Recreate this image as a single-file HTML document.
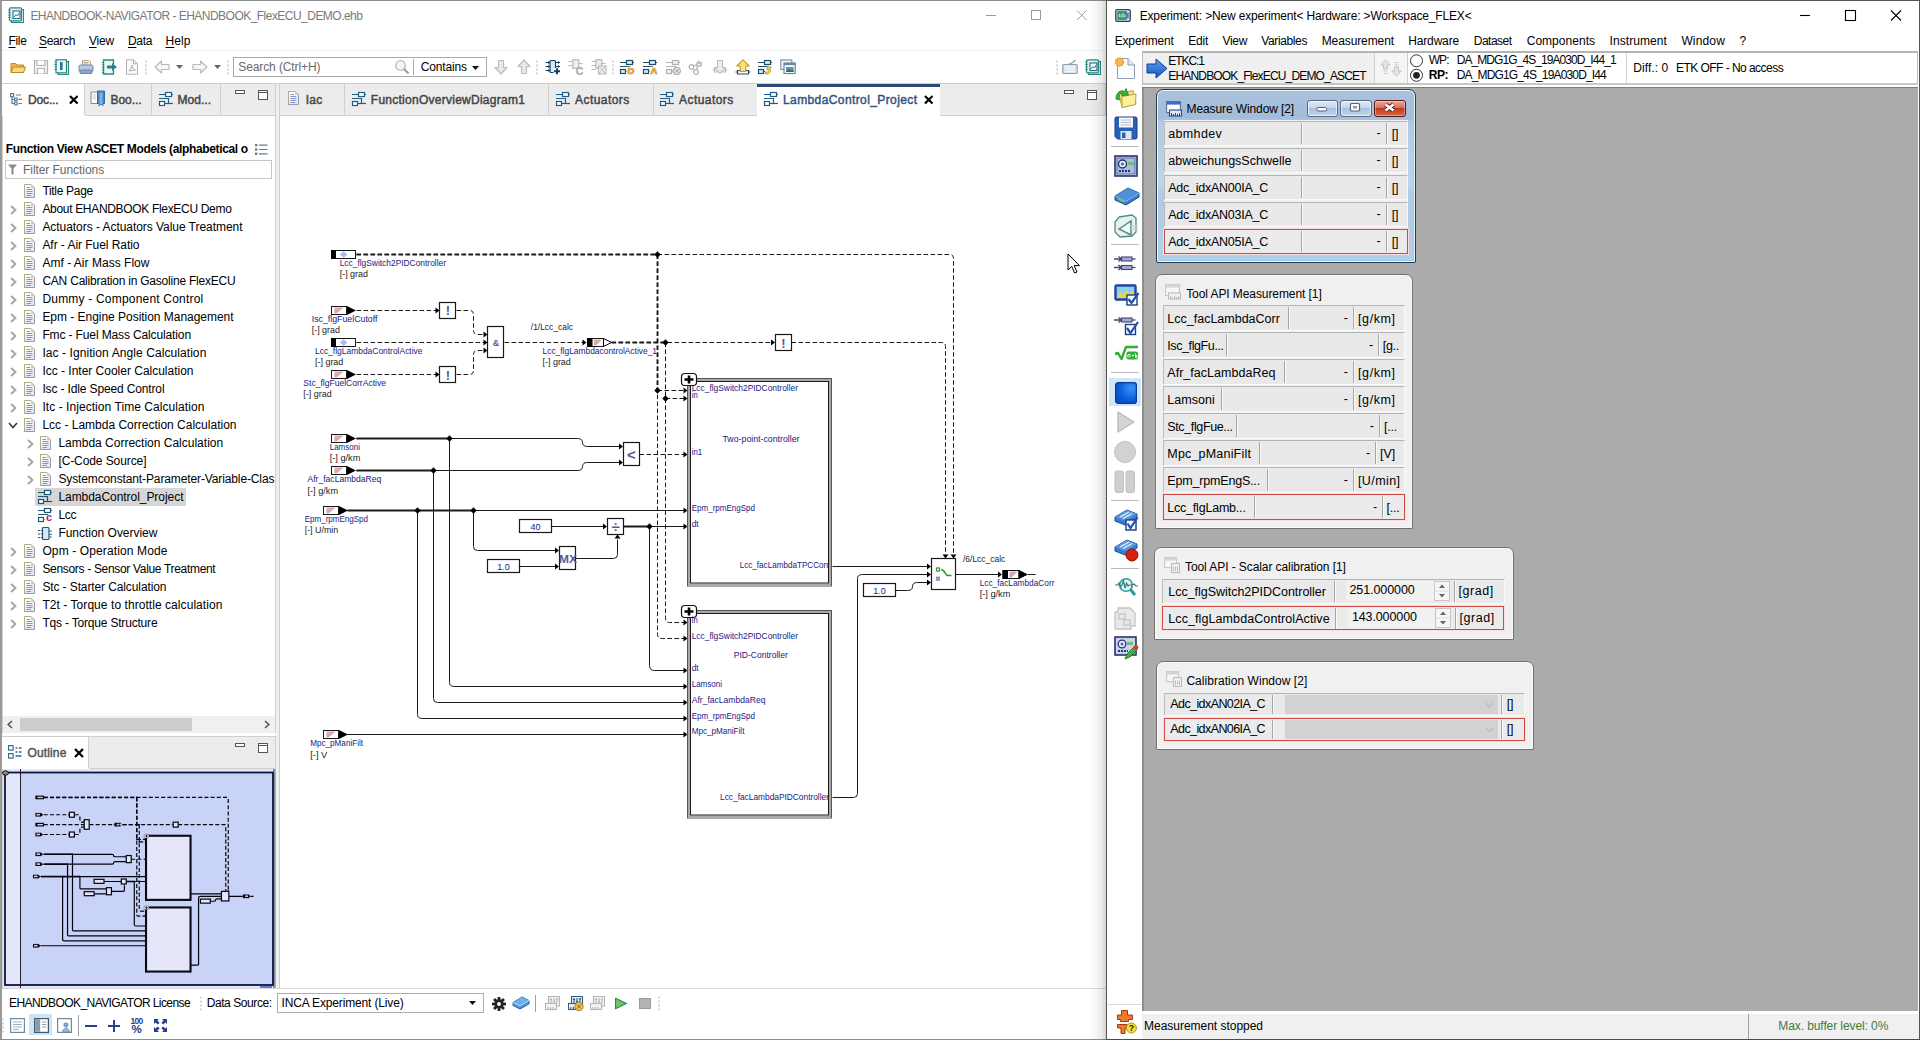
<!DOCTYPE html>
<html lang="en"><head><meta charset="utf-8"><title>EHANDBOOK-NAVIGATOR / INCA Experiment</title>
<style>html,body{margin:0;padding:0}
body{width:1920px;height:1040px;position:relative;overflow:hidden;background:#fff;font-family:"Liberation Sans",sans-serif;font-size:12px;color:#000}
.a{position:absolute}
.g{left:0;top:0}
.t{position:absolute;white-space:nowrap;line-height:1}
u{text-decoration-thickness:1px;text-underline-offset:1.5px}

.rw{background:#e9e9e9;box-sizing:border-box;border:1px solid;border-color:#b4b4b4 #fbfbfb #fbfbfb #bcbcbc}
.rw.red{border:1.5px solid #cf4b47;background:#ebebeb;box-shadow:0 0 0 1px #fbdcdc}
.dv{width:1px;background:#a6a6a6;box-shadow:1px 0 0 #fafafa}
.pw{background:#f0f0f0;border:1px solid #707070;border-radius:7px 7px 1px 1px;box-sizing:border-box;box-shadow:inset 0 0 0 1px #fafafa}
.aero{box-sizing:border-box;border:1px solid #2e3a48;border-radius:7px 7px 2px 2px;background:linear-gradient(180deg,#aac2de 0,#a2bcda 16%,#b1cae5 19%,#bdd4ec 55%,#aecbe7 60%,#b4cfe9 100%);box-shadow:inset 0 0 0 1px rgba(255,255,255,.8),inset -2px -2px 0 0 rgba(120,210,240,.55)}
.ab{box-sizing:border-box;border:1px solid #5a6a80;border-radius:3px;background:linear-gradient(180deg,#dfe9f5 0,#c5d6ea 45%,#a9c1dd 50%,#c3d6ea 100%);box-shadow:inset 0 0 0 1px rgba(255,255,255,.6)}
.ac{border-color:#5a1d14;background:linear-gradient(180deg,#e9a99b 0,#d4705c 45%,#c03a24 50%,#d46a4a 100%);box-shadow:inset 0 0 0 1px rgba(255,255,255,.35)}
</style></head>
<body>
<svg width="0" height="0" style="position:absolute"><defs><symbol id="i-doc" viewBox="0 0 13 16"><linearGradient id="dgr" x1="0" y1="0" x2="0" y2="1"><stop offset="0" stop-color="#fffef8"/><stop offset="1" stop-color="#dfe7f7"/></linearGradient><path d="M.5 .5H7L10.5 4V13.5H.5Z" fill="url(#dgr)" stroke="#9a9aa6" stroke-width="1"/><path d="M.5 13.5V.5H7L10.5 4" fill="none" stroke="#b5ab8c" stroke-width="1"/><path d="M7 .5V4H10.5Z" fill="#d6d0b8"/><path d="M2.5 3.5H6M2.5 5.5H8.5M2.5 7.5H8.5M2.5 9.5H8.5M2.5 11.5H7" stroke="#7d97cf" stroke-width="1"/></symbol></defs></svg>
<div class="a g" id="navigator-window" aria-label="EHANDBOOK-NAVIGATOR">
<div class="a g" id="nav-chrome" aria-label="Title bar, menu and toolbar">
<div class="a" style="left:0px;top:0px;width:1106px;height:1040px;background:#fff;"></div>
<div class="a" style="left:0px;top:0px;width:1106px;height:1px;background:#8c8c8c;"></div>
<div class="a" style="left:0px;top:0px;width:1.5px;height:1040px;background:#9a9a9a;"></div>
<svg class="a" style="left:8px;top:7px;" width="16" height="16" viewBox="0 0 16 16"><rect x="3.5" y="2.5" width="12" height="13" fill="#e6f3f1" stroke="#2a8a80" stroke-width="1.1"/><rect x="1.5" y=".8" width="12" height="13" rx="1" fill="#dff0ee" stroke="#2a8a80" stroke-width="1.2"/><path d="M.3 3H2.6M.3 5.5H2.6M.3 8H2.6M.3 10.5H2.6" stroke="#2a8a80" stroke-width="1.1"/><rect x="5" y="4" width="7" height="7.5" fill="#fff" stroke="#256f8a" stroke-width="1.1"/><path d="M6 10L8 7.5L9.5 9L11.5 5.5" fill="none" stroke="#256f8a" stroke-width="1"/></svg>
<span class="t" style="left:30.4px;top:9.6px;color:#7a7a7a;letter-spacing:-0.53px;">EHANDBOOK-NAVIGATOR - EHANDBOOK_FlexECU_DEMO.ehb</span>
<svg class="a" style="left:980px;top:5px" width="120" height="20" viewBox="0 0 120 20"><g fill="none" stroke="#9b9b9b" stroke-width="1"><path d="M6 10.5H16"/><rect x="51.5" y="5.5" width="9" height="9"/><path d="M97 5.5L106.5 15M106.5 5.5L97 15"/></g></svg>
<span class="t" style="left:8.5px;top:34.5px;letter-spacing:-0.34px;"><u>F</u>ile</span>
<span class="t" style="left:39.0px;top:34.5px;letter-spacing:-0.34px;"><u>S</u>earch</span>
<span class="t" style="left:89.0px;top:34.5px;letter-spacing:-0.20px;"><u>V</u>iew</span>
<span class="t" style="left:128.0px;top:34.5px;letter-spacing:-0.34px;"><u>D</u>ata</span>
<span class="t" style="left:165.5px;top:34.5px;letter-spacing:0.08px;"><u>H</u>elp</span>
<div class="a" style="left:2px;top:50px;width:1104px;height:1px;background:#f0f0f0;"></div>
<svg class="a" style="left:145px;top:59px;" width="2" height="16" viewBox="0 0 2 16"><rect x="0" y="1.5" width="2" height="2" fill="#d6d6d6"/><rect x="0" y="5.5" width="2" height="2" fill="#d6d6d6"/><rect x="0" y="9.5" width="2" height="2" fill="#d6d6d6"/><rect x="0" y="13.5" width="2" height="2" fill="#d6d6d6"/></svg>
<svg class="a" style="left:226.5px;top:59px;" width="2" height="16" viewBox="0 0 2 16"><rect x="0" y="1.5" width="2" height="2" fill="#d6d6d6"/><rect x="0" y="5.5" width="2" height="2" fill="#d6d6d6"/><rect x="0" y="9.5" width="2" height="2" fill="#d6d6d6"/><rect x="0" y="13.5" width="2" height="2" fill="#d6d6d6"/></svg>
<svg class="a" style="left:536px;top:59px;" width="2" height="16" viewBox="0 0 2 16"><rect x="0" y="1.5" width="2" height="2" fill="#d6d6d6"/><rect x="0" y="5.5" width="2" height="2" fill="#d6d6d6"/><rect x="0" y="9.5" width="2" height="2" fill="#d6d6d6"/><rect x="0" y="13.5" width="2" height="2" fill="#d6d6d6"/></svg>
<svg class="a" style="left:611.5px;top:59px;" width="2" height="16" viewBox="0 0 2 16"><rect x="0" y="1.5" width="2" height="2" fill="#d6d6d6"/><rect x="0" y="5.5" width="2" height="2" fill="#d6d6d6"/><rect x="0" y="9.5" width="2" height="2" fill="#d6d6d6"/><rect x="0" y="13.5" width="2" height="2" fill="#d6d6d6"/></svg>
<svg class="a" style="left:1056px;top:59px;" width="2" height="16" viewBox="0 0 2 16"><rect x="0" y="1.5" width="2" height="2" fill="#d6d6d6"/><rect x="0" y="5.5" width="2" height="2" fill="#d6d6d6"/><rect x="0" y="9.5" width="2" height="2" fill="#d6d6d6"/><rect x="0" y="13.5" width="2" height="2" fill="#d6d6d6"/></svg>
<svg class="a" style="left:10px;top:59px;" width="16" height="16" viewBox="0 0 16 16"><path d="M1 4.5H5.5L7 6H13.5V13.5H1Z" fill="#e8b84c" stroke="#b98a25" stroke-width="1"/><path d="M1 13.5L3.5 8H15.5L13.5 13.5Z" fill="#fbd977" stroke="#b98a25" stroke-width="1"/></svg>
<svg class="a" style="left:33px;top:59px;" width="16" height="16" viewBox="0 0 16 16"><path d="M1.5 1.5H14.5V14.5H1.5Z" fill="#f4f4f4" stroke="#b4b4b4" stroke-width="1.2"/><path d="M4 1.5V6.5H12V1.5" fill="#fff" stroke="#b4b4b4" stroke-width="1.2"/><path d="M4.5 14.5V9.5H11.5V14.5" fill="#fff" stroke="#b4b4b4" stroke-width="1.2"/></svg>
<svg class="a" style="left:54px;top:59px;" width="16" height="16" viewBox="0 0 16 16"><rect x="4" y="2.5" width="10.5" height="13" fill="#e6f3f1" stroke="#2a8a80" stroke-width="1.2"/><rect x="2" y=".8" width="10.5" height="13" fill="#eef7f6" stroke="#2a8a80" stroke-width="1.2"/><path d="M.5 3H3M.5 5.5H3M.5 8H3M.5 10.5H3" stroke="#2a8a80" stroke-width="1.2"/><rect x="6" y="3" width="2.6" height="8" fill="#2f6f8f"/></svg>
<svg class="a" style="left:78px;top:59px;" width="16" height="16" viewBox="0 0 16 16"><path d="M4.5 6V1.5H11L12.5 3V6" fill="#fff8e0" stroke="#b5a572" stroke-width="1"/><rect x="1" y="6" width="14" height="6.5" rx="1.5" fill="#b8c8e4" stroke="#6c86b6" stroke-width="1"/><rect x="2" y="11" width="12" height="3.5" rx="1" fill="#8aa2cf" stroke="#6c86b6" stroke-width="1"/><path d="M5.5 3.5H10.5M5.5 5H10.5" stroke="#999" stroke-width=".8"/></svg>
<svg class="a" style="left:101px;top:59px;" width="16" height="16" viewBox="0 0 16 16"><path d="M12.5 5V1H2.5V15H12.5V11" fill="#eef7f6" stroke="#2a8a80" stroke-width="1.3"/><path d="M.8 3.5H3.2M.8 6H3.2M.8 8.5H3.2M.8 11H3.2M.8 13.5H3.2" stroke="#2a8a80" stroke-width="1.2"/><path d="M6 6.5H11V4L16 8L11 12V9.5H6Z" fill="#2a7f8a"/></svg>
<svg class="a" style="left:124px;top:59px;" width="16" height="16" viewBox="0 0 16 16"><path d="M2.5 .8H9.5L13.5 4.8V15.2H2.5Z" fill="#fafafa" stroke="#b0b0b0" stroke-width="1"/><path d="M9.5 .8V4.8H13.5" fill="none" stroke="#b0b0b0" stroke-width="1"/><path d="M5 12C7 10 8 7.5 8 6C8 8.5 9.5 10.5 11.5 11C9 11 7 11.3 5 12Z" fill="none" stroke="#b0b0b0" stroke-width="1"/></svg>
<svg class="a" style="left:154px;top:59px;" width="16" height="16" viewBox="0 0 16 16"><path d="M1 8L7.5 2V5.5H15V10.5H7.5V14Z" fill="#f6f6f6" stroke="#b9b9b9" stroke-width="1.2" stroke-linejoin="round"/></svg>
<svg class="a" style="left:192px;top:59px;" width="16" height="16" viewBox="0 0 16 16"><path d="M15 8L8.5 2V5.5H1V10.5H8.5V14Z" fill="#f6f6f6" stroke="#b9b9b9" stroke-width="1.2" stroke-linejoin="round"/></svg>
<svg class="a" style="left:493px;top:59px;" width="16" height="16" viewBox="0 0 16 16"><path d="M8 15L2 8.5H5.5V1.5H10.5V8.5H14Z" fill="#e9e9e9" stroke="#bdbdbd" stroke-width="1.2" stroke-linejoin="round"/></svg>
<svg class="a" style="left:516px;top:59px;" width="16" height="16" viewBox="0 0 16 16"><path d="M8 1L2 7.5H5.5V14.5H10.5V7.5H14Z" fill="#e9e9e9" stroke="#bdbdbd" stroke-width="1.2" stroke-linejoin="round"/></svg>
<svg class="a" style="left:545px;top:59px;" width="16" height="16" viewBox="0 0 16 16"><rect x="5" y="1.5" width="5.5" height="12" rx="1" fill="#dce9f8" stroke="#17405c" stroke-width="1.2"/><path d="M.5 3.5H5M.5 7.5H5M.5 11.5H5M10.5 3.5H15M10.5 7.5H15" stroke="#17405c" stroke-width="1.1"/><path d="M3 2L5 3.5L3 5M3 6L5 7.5L3 9M3 10L5 11.5L3 13M13 2L15 3.5L13 5M13 6L15 7.5L13 9" fill="#17405c"/><rect x="8.5" y="9" width="7" height="6.5" fill="#fff"/><path d="M9 12.2H15M12 9.2V15.2" stroke="#17405c" stroke-width="2"/></svg>
<svg class="a" style="left:568px;top:59px;" width="16" height="16" viewBox="0 0 16 16"><rect x="4.8" y=".8" width="6" height="8.5" fill="#efefef" stroke="#b8b8b8" stroke-width="1.2"/><path d="M.5 2.5H4.5M.5 6.5H4.5M11 4.5H14.5" stroke="#b8b8b8" stroke-width="1.1"/><text x="11.5" y="15.5" font-size="10.5" font-weight="bold" text-anchor="middle" fill="#b0b0b0" stroke="#b0b0b0" stroke-width=".4" font-family="Liberation Sans,sans-serif">C</text></svg>
<svg class="a" style="left:591px;top:59px;" width="16" height="16" viewBox="0 0 16 16"><rect x="4.8" y=".8" width="6" height="8.5" fill="#efefef" stroke="#b8b8b8" stroke-width="1.2"/><path d="M.5 2.5H4.5M.5 6.5H4.5M11 4.5H14.5" stroke="#b8b8b8" stroke-width="1.1"/><rect x="7.5" y="7" width="7.5" height="8" fill="#f2f2f2" stroke="#b8b8b8" stroke-width="1.1"/><path d="M7.5 7L15 15M15 7L7.5 15M.5 10.5H4.5" stroke="#b8b8b8" stroke-width="1"/></svg>
<svg class="a" style="left:619px;top:59px;" width="16" height="16" viewBox="0 0 16 16"><g transform="translate(1 1)" fill="none" stroke="#1f4d66" stroke-width="1.2"><rect x="6.5" y=".5" width="6" height="4" fill="#dcecf7"/><path d="M0 2.5H6.5M12.5 2.5H14"/><path d="M0 6.5H9.5V11.5"/><rect x=".5" y="9.5" width="5" height="4" fill="#dcecf7"/><path d="M5.5 11.5H14"/></g><rect x="7.5" y="7.8" width="9" height="8.5" fill="#fff"/><text x="12" y="15.4" font-size="9.5" font-weight="bold" text-anchor="middle" fill="#f2a640" stroke="#c98322" stroke-width=".7" paint-order="stroke" font-family="Liberation Sans,sans-serif">D</text></svg>
<svg class="a" style="left:642px;top:59px;" width="16" height="16" viewBox="0 0 16 16"><g transform="translate(1 1)" fill="none" stroke="#1f4d66" stroke-width="1.2"><rect x="6.5" y=".5" width="6" height="4" fill="#dcecf7"/><path d="M0 2.5H6.5M12.5 2.5H14"/><path d="M0 6.5H9.5V11.5"/><rect x=".5" y="9.5" width="5" height="4" fill="#dcecf7"/><path d="M5.5 11.5H14"/></g><rect x="7.5" y="7.8" width="9" height="8.5" fill="#fff"/><text x="12" y="15.4" font-size="9.5" font-weight="bold" text-anchor="middle" fill="#f2a640" stroke="#c98322" stroke-width=".7" paint-order="stroke" font-family="Liberation Sans,sans-serif">A</text></svg>
<svg class="a" style="left:665px;top:59px;" width="16" height="16" viewBox="0 0 16 16"><g transform="translate(1 1)" fill="none" stroke="#b0b0b0" stroke-width="1.2"><rect x="6.5" y=".5" width="6" height="4" fill="#f0f0f0"/><path d="M0 2.5H6.5M12.5 2.5H14"/><path d="M0 6.5H9.5V11.5"/><rect x=".5" y="9.5" width="5" height="4" fill="#f0f0f0"/><path d="M5.5 11.5H14"/></g><circle cx="11.8" cy="12" r="3.6" fill="#eee" stroke="#b0b0b0" stroke-width="1.2"/><path d="M9.6 9.8L14 14.2M14 9.8L9.6 14.2" stroke="#b0b0b0" stroke-width="1.2"/></svg>
<svg class="a" style="left:688px;top:59px;" width="16" height="16" viewBox="0 0 16 16"><g fill="none" stroke="#b4b4b4" stroke-width="1.3"><circle cx="3.5" cy="8" r="2.3"/><circle cx="8" cy="13" r="2.3"/><path d="M5.5 7L14 3M8.5 11L11 1.5"/><rect x="9" y="4" width="4" height="3" fill="#f3f3f3"/></g></svg>
<svg class="a" style="left:712px;top:59px;" width="16" height="16" viewBox="0 0 16 16"><path d="M2.5 9.5H13.5V13H2.5Z" fill="#f4f4f4" stroke="#b8b8b8" stroke-width="1.1"/><path d="M.5 11H2.5M13.5 11H15.5" stroke="#b8b8b8" stroke-width="1.1"/><path d="M8 14.5L2.5 8.5H5.5V1.5H10.5V8.5H13.5Z" fill="#ececec" stroke="#b8b8b8" stroke-width="1.1" stroke-linejoin="round"/></svg>
<svg class="a" style="left:735px;top:59px;" width="16" height="16" viewBox="0 0 16 16"><path d="M2.5 11.5H13.5V15H2.5Z" fill="#fff" stroke="#1f4d66" stroke-width="1.2"/><path d="M.5 13H2.5M13.5 13H15.5" stroke="#1f4d66" stroke-width="1.2"/><path d="M8 .8L1.8 7H5.2V12.5H10.8V7H14.2Z" fill="#fbe08a" stroke="#c79a22" stroke-width="1.1" stroke-linejoin="round"/></svg>
<svg class="a" style="left:757px;top:59px;" width="16" height="16" viewBox="0 0 16 16"><g transform="translate(1 1)" fill="none" stroke="#1f4d66" stroke-width="1.2"><rect x="6.5" y=".5" width="6" height="4" fill="#dcecf7"/><path d="M0 2.5H6.5M12.5 2.5H14"/><path d="M0 6.5H9.5V11.5"/><rect x=".5" y="9.5" width="5" height="4" fill="#dcecf7"/><path d="M5.5 11.5H14"/></g><rect x="8" y="8" width="8" height="8" fill="#fff"/><path d="M8.5 15C13 15.5 15 12 12.5 9L14.5 8.5L10.5 7L10 11L11.5 10C12.5 12 11 13.5 8.5 13Z" fill="#f6d65a" stroke="#b8921a" stroke-width=".8"/></svg>
<svg class="a" style="left:780px;top:59px;" width="16" height="16" viewBox="0 0 16 16"><rect x=".8" y="1" width="11" height="9.5" fill="#f4f6f8" stroke="#7e93a6" stroke-width="1.2"/><rect x="4" y="4" width="11.2" height="10.5" fill="#fff" stroke="#6d8499" stroke-width="1.2"/><rect x="4" y="4" width="11.2" height="2.2" fill="#6d8499"/><rect x="6" y="8" width="7.5" height="5" fill="#5e8fb8"/><path d="M6 13L9 10L11 12L13.5 10.5V13Z" fill="#2d6a4f"/></svg>
<svg class="a" style="left:1062px;top:59px;" width="16" height="16" viewBox="0 0 16 16"><path d="M6 5.5C8 5 12 3 13.5 .8" fill="none" stroke="#9aa7b0" stroke-width="1.2"/><rect x=".8" y="5.5" width="14.4" height="9" rx="1" fill="#dfe7ee" stroke="#8ea0ad" stroke-width="1.2"/><path d="M3 8H13M3 10H13M4 12.3H12" stroke="#fff" stroke-width="1.2" stroke-dasharray="1.4 .8"/></svg>
<svg class="a" style="left:1085px;top:59px;" width="16" height="16" viewBox="0 0 16 16"><rect x="3.5" y="2.5" width="12" height="13" fill="#e6f3f1" stroke="#2a8a80" stroke-width="1.1"/><rect x="1.5" y=".8" width="12" height="13" rx="1" fill="#dff0ee" stroke="#2a8a80" stroke-width="1.2"/><path d="M.3 3H2.6M.3 5.5H2.6M.3 8H2.6M.3 10.5H2.6" stroke="#2a8a80" stroke-width="1.1"/><rect x="5" y="4" width="7" height="7.5" fill="#fff" stroke="#256f8a" stroke-width="1.1"/><path d="M6 10L8 7.5L9.5 9L11.5 5.5" fill="none" stroke="#256f8a" stroke-width="1"/></svg>
<svg class="a" style="left:176px;top:65px;" width="7" height="4" viewBox="0 0 7 4"><path d="M0 0H7L3.5 4Z" fill="#666"/></svg>
<svg class="a" style="left:214px;top:65px;" width="7" height="4" viewBox="0 0 7 4"><path d="M0 0H7L3.5 4Z" fill="#666"/></svg>
<div class="a" style="left:233px;top:57px;width:254px;height:20px;background:#fff;border:1px solid #a9a9a9;box-sizing:border-box;"></div>
<span class="t" style="left:238.3px;top:60.6px;color:#6a6a6a;letter-spacing:-0.11px;">Search (Ctrl+H)</span>
<svg class="a" style="left:394px;top:59px" width="16" height="16" viewBox="0 0 16 16"><circle cx="6.5" cy="6.5" r="4.8" fill="#f4f8fb" stroke="#b9b9b9" stroke-width="1.3"/><path d="M10 10L14.5 14.5" stroke="#9a9a9a" stroke-width="2"/></svg>
<div class="a" style="left:413px;top:59px;width:1px;height:16px;background:#a9a9a9;"></div>
<span class="t" style="left:420.8px;top:60.6px;letter-spacing:-0.17px;">Contains</span>
<svg class="a" style="left:472px;top:65.5px;" width="7" height="4" viewBox="0 0 7 4"><path d="M0 0H7L3.5 4Z" fill="#111"/></svg>
<div class="a" style="left:2px;top:83px;width:1104px;height:1px;background:#d4d4d4;"></div>
<div class="a" style="left:2px;top:83px;width:274px;height:33px;background:#ececec;border:1px solid #cfcfcf;box-sizing:border-box;"></div>
<div class="a" style="left:2px;top:84px;width:82.5px;height:32px;background:#fff;"></div>
<div class="a" style="left:84px;top:84px;width:1px;height:31px;background:#cfcfcf;"></div>
<div class="a" style="left:151px;top:84px;width:1px;height:31px;background:#cfcfcf;"></div>
<div class="a" style="left:220px;top:84px;width:1px;height:31px;background:#cfcfcf;"></div>
<svg class="a" style="left:10px;top:93px" width="13" height="13" viewBox="0 0 13 13"><g fill="none" stroke="#5b7f95" stroke-width="1.2"><rect x=".6" y=".6" width="3" height="3"/><path d="M2 3.6V10.5H5M2 6.5H5"/><rect x="4.5" y="5" width="2.6" height="2.6"/><rect x="4.5" y="9.2" width="2.6" height="2.6"/><path d="M6 2H11M8.5 6.3H12M8.5 10.5H12"/></g></svg>
<span class="t" style="left:28.0px;top:94.1px;-webkit-text-stroke:.45px;color:#444;letter-spacing:-0.14px;">Doc...</span>
<svg class="a" style="left:69px;top:94.5px" width="9.5" height="9.5" viewBox="0 0 10 10"><path d="M1 1L9 9M9 1L1 9" stroke="#000" stroke-width="2.3" fill="none"/></svg>
<svg class="a" style="left:90px;top:90px" width="17" height="17" viewBox="0 0 17 17"><path d="M1 2H7.5V13.5H1Z" fill="#fff" stroke="#7d8b96" stroke-width="1"/><path d="M2.5 5H6M2.5 7H6M2.5 9H6" stroke="#b0bcc6" stroke-width=".8"/><path d="M7.5 1H14.5V13.5H7.5Z" fill="#5b9bd5" stroke="#2e6da4" stroke-width="1"/><path d="M9 2V16L11 14L13 16V2Z" fill="#7fb6e6" stroke="#2e6da4" stroke-width=".8"/></svg>
<span class="t" style="left:110.5px;top:94.1px;-webkit-text-stroke:.45px;color:#444;letter-spacing:-0.05px;">Boo...</span>
<svg class="a" style="left:157.5px;top:91px;" width="16" height="16" viewBox="0 0 16 16"><g transform="translate(1 1)" fill="none" stroke="#1f5f86" stroke-width="1.2"><rect x="6.5" y=".5" width="6" height="4" fill="#fff"/><path d="M0 2.5H6.5M12.5 2.5H14"/><path d="M0 6.5H9.5V11.5"/><rect x=".5" y="9.5" width="5" height="4" fill="#fff"/><path d="M5.5 11.5H14"/></g></svg>
<span class="t" style="left:177.5px;top:94.1px;-webkit-text-stroke:.45px;color:#444;letter-spacing:0.03px;">Mod...</span>
<svg class="a" style="left:234.5px;top:90px" width="36" height="12" viewBox="0 0 36 12"><g fill="#fff" stroke="#555" stroke-width="1"><rect x=".5" y=".5" width="9" height="3"/><rect x="23.5" y=".5" width="9" height="9"/><path d="M23.5 2.5H32.5"/></g></svg>
<div class="a" style="left:279px;top:83px;width:827px;height:33px;background:#ececec;border:1px solid #cfcfcf;box-sizing:border-box;"></div>
<div class="a" style="left:344px;top:84px;width:1px;height:31px;background:#cfcfcf;"></div>
<div class="a" style="left:548px;top:84px;width:1px;height:31px;background:#cfcfcf;"></div>
<div class="a" style="left:652.5px;top:84px;width:1px;height:31px;background:#cfcfcf;"></div>
<svg class="a" style="left:288px;top:91px;" width="13" height="16" viewBox="0 0 13 16"><use href="#i-doc"/></svg>
<span class="t" style="left:305.8px;top:94.1px;-webkit-text-stroke:.45px;color:#444;letter-spacing:0.17px;">Iac</span>
<svg class="a" style="left:350.5px;top:91px;" width="16" height="16" viewBox="0 0 16 16"><g transform="translate(1 1)" fill="none" stroke="#1f5f86" stroke-width="1.2"><rect x="6.5" y=".5" width="6" height="4" fill="#fff"/><path d="M0 2.5H6.5M12.5 2.5H14"/><path d="M0 6.5H9.5V11.5"/><rect x=".5" y="9.5" width="5" height="4" fill="#fff"/><path d="M5.5 11.5H14"/></g></svg>
<span class="t" style="left:370.8px;top:94.1px;-webkit-text-stroke:.45px;color:#444;letter-spacing:0.26px;">FunctionOverviewDiagram1</span>
<svg class="a" style="left:555px;top:91px;" width="16" height="16" viewBox="0 0 16 16"><g transform="translate(1 1)" fill="none" stroke="#1f5f86" stroke-width="1.2"><rect x="6.5" y=".5" width="6" height="4" fill="#fff"/><path d="M0 2.5H6.5M12.5 2.5H14"/><path d="M0 6.5H9.5V11.5"/><rect x=".5" y="9.5" width="5" height="4" fill="#fff"/><path d="M5.5 11.5H14"/></g></svg>
<span class="t" style="left:575.0px;top:94.1px;-webkit-text-stroke:.45px;color:#444;letter-spacing:0.45px;">Actuators</span>
<svg class="a" style="left:659px;top:91px;" width="16" height="16" viewBox="0 0 16 16"><g transform="translate(1 1)" fill="none" stroke="#1f5f86" stroke-width="1.2"><rect x="6.5" y=".5" width="6" height="4" fill="#fff"/><path d="M0 2.5H6.5M12.5 2.5H14"/><path d="M0 6.5H9.5V11.5"/><rect x=".5" y="9.5" width="5" height="4" fill="#fff"/><path d="M5.5 11.5H14"/></g></svg>
<span class="t" style="left:679.0px;top:94.1px;-webkit-text-stroke:.45px;color:#444;letter-spacing:0.45px;">Actuators</span>
<div class="a" style="left:756.5px;top:84px;width:183px;height:32px;background:#fff;"></div>
<div class="a" style="left:756.5px;top:84px;width:183px;height:3px;background:#2b4a78;"></div>
<svg class="a" style="left:763px;top:91px;" width="16" height="16" viewBox="0 0 16 16"><g transform="translate(1 1)" fill="none" stroke="#1f5f86" stroke-width="1.2"><rect x="6.5" y=".5" width="6" height="4" fill="#fff"/><path d="M0 2.5H6.5M12.5 2.5H14"/><path d="M0 6.5H9.5V11.5"/><rect x=".5" y="9.5" width="5" height="4" fill="#fff"/><path d="M5.5 11.5H14"/></g></svg>
<span class="t" style="left:783.0px;top:94.1px;-webkit-text-stroke:.45px;color:#34527e;letter-spacing:0.40px;">LambdaControl_Project</span>
<svg class="a" style="left:923.5px;top:94.5px" width="9.5" height="9.5" viewBox="0 0 10 10"><path d="M1 1L9 9M9 1L1 9" stroke="#000" stroke-width="2.3" fill="none"/></svg>
<svg class="a" style="left:1063.5px;top:90px" width="36" height="12" viewBox="0 0 36 12"><g fill="#fff" stroke="#555" stroke-width="1"><rect x=".5" y=".5" width="9" height="3"/><rect x="23.5" y=".5" width="9" height="9"/><path d="M23.5 2.5H32.5"/></g></svg>
</div>
<div class="a g" id="nav-tree" aria-label="Function view">
<div class="a" style="left:2px;top:116px;width:274px;height:617px;background:#fff;border:1px solid #d0d0d0;box-sizing:border-box;border-top:none;"></div>
<div class="a" style="left:276px;top:84px;width:3px;height:905px;background:#efefef;"></div>
<div class="a" style="left:279px;top:116px;width:1px;height:873px;background:#cdcdcd;"></div>
<span class="t" style="left:5.8px;top:143.3px;font-weight:bold;letter-spacing:-0.35px;">Function View ASCET Models (alphabetical o</span>
<svg class="a" style="left:255px;top:143px" width="13" height="13" viewBox="0 0 13 13"><g fill="#6b7d8c"><rect x="0" y="1" width="2.4" height="2.4"/><rect x="0" y="5.3" width="2.4" height="2.4"/><rect x="0" y="9.6" width="2.4" height="2.4"/></g><path d="M4 2.2H12.5M4 6.5H12.5M4 10.8H12.5" stroke="#6b7d8c" stroke-width="1.2"/></svg>
<div class="a" style="left:5px;top:160px;width:267px;height:19px;background:#fff;border:1px solid #c6c6c6;box-sizing:border-box;"></div>
<svg class="a" style="left:8px;top:164px" width="9" height="11" viewBox="0 0 9 11"><path d="M0 .5H9L5.5 4.5V10.5H3.5V4.5Z" fill="#8a8a8a"/></svg>
<span class="t" style="left:23.0px;top:164.3px;color:#666;letter-spacing:-0.06px;">Filter Functions</span>
<svg class="a" style="left:24px;top:183.5px;" width="13" height="16" viewBox="0 0 13 16"><use href="#i-doc"/></svg>
<span class="t" style="left:42.4px;top:184.5px;letter-spacing:-0.31px;">Title Page</span>
<svg class="a" style="left:10px;top:205px" width="7" height="10" viewBox="0 0 7 10"><path d="M1 1L5.5 5L1 9" fill="none" stroke="#a2a2a2" stroke-width="1.8"/></svg>
<svg class="a" style="left:24px;top:201.5px;" width="13" height="16" viewBox="0 0 13 16"><use href="#i-doc"/></svg>
<span class="t" style="left:42.4px;top:202.5px;letter-spacing:-0.32px;">About EHANDBOOK FlexECU Demo</span>
<svg class="a" style="left:10px;top:223px" width="7" height="10" viewBox="0 0 7 10"><path d="M1 1L5.5 5L1 9" fill="none" stroke="#a2a2a2" stroke-width="1.8"/></svg>
<svg class="a" style="left:24px;top:219.5px;" width="13" height="16" viewBox="0 0 13 16"><use href="#i-doc"/></svg>
<span class="t" style="left:42.4px;top:220.5px;letter-spacing:-0.05px;">Actuators - Actuators Value Treatment</span>
<svg class="a" style="left:10px;top:241px" width="7" height="10" viewBox="0 0 7 10"><path d="M1 1L5.5 5L1 9" fill="none" stroke="#a2a2a2" stroke-width="1.8"/></svg>
<svg class="a" style="left:24px;top:237.5px;" width="13" height="16" viewBox="0 0 13 16"><use href="#i-doc"/></svg>
<span class="t" style="left:42.4px;top:238.5px;letter-spacing:-0.05px;">Afr - Air Fuel Ratio</span>
<svg class="a" style="left:10px;top:259px" width="7" height="10" viewBox="0 0 7 10"><path d="M1 1L5.5 5L1 9" fill="none" stroke="#a2a2a2" stroke-width="1.8"/></svg>
<svg class="a" style="left:24px;top:255.5px;" width="13" height="16" viewBox="0 0 13 16"><use href="#i-doc"/></svg>
<span class="t" style="left:42.4px;top:256.5px;letter-spacing:0.02px;">Amf - Air Mass Flow</span>
<svg class="a" style="left:10px;top:277px" width="7" height="10" viewBox="0 0 7 10"><path d="M1 1L5.5 5L1 9" fill="none" stroke="#a2a2a2" stroke-width="1.8"/></svg>
<svg class="a" style="left:24px;top:273.5px;" width="13" height="16" viewBox="0 0 13 16"><use href="#i-doc"/></svg>
<span class="t" style="left:42.4px;top:274.5px;letter-spacing:-0.22px;">CAN Calibration in Gasoline FlexECU</span>
<svg class="a" style="left:10px;top:295px" width="7" height="10" viewBox="0 0 7 10"><path d="M1 1L5.5 5L1 9" fill="none" stroke="#a2a2a2" stroke-width="1.8"/></svg>
<svg class="a" style="left:24px;top:291.5px;" width="13" height="16" viewBox="0 0 13 16"><use href="#i-doc"/></svg>
<span class="t" style="left:42.4px;top:292.5px;letter-spacing:0.20px;">Dummy - Component Control</span>
<svg class="a" style="left:10px;top:313px" width="7" height="10" viewBox="0 0 7 10"><path d="M1 1L5.5 5L1 9" fill="none" stroke="#a2a2a2" stroke-width="1.8"/></svg>
<svg class="a" style="left:24px;top:309.5px;" width="13" height="16" viewBox="0 0 13 16"><use href="#i-doc"/></svg>
<span class="t" style="left:42.4px;top:310.5px;letter-spacing:-0.03px;">Epm - Engine Position Management</span>
<svg class="a" style="left:10px;top:331px" width="7" height="10" viewBox="0 0 7 10"><path d="M1 1L5.5 5L1 9" fill="none" stroke="#a2a2a2" stroke-width="1.8"/></svg>
<svg class="a" style="left:24px;top:327.5px;" width="13" height="16" viewBox="0 0 13 16"><use href="#i-doc"/></svg>
<span class="t" style="left:42.4px;top:328.5px;letter-spacing:-0.13px;">Fmc - Fuel Mass Calculation</span>
<svg class="a" style="left:10px;top:349px" width="7" height="10" viewBox="0 0 7 10"><path d="M1 1L5.5 5L1 9" fill="none" stroke="#a2a2a2" stroke-width="1.8"/></svg>
<svg class="a" style="left:24px;top:345.5px;" width="13" height="16" viewBox="0 0 13 16"><use href="#i-doc"/></svg>
<span class="t" style="left:42.4px;top:346.5px;letter-spacing:0.08px;">Iac - Ignition Angle Calculation</span>
<svg class="a" style="left:10px;top:367px" width="7" height="10" viewBox="0 0 7 10"><path d="M1 1L5.5 5L1 9" fill="none" stroke="#a2a2a2" stroke-width="1.8"/></svg>
<svg class="a" style="left:24px;top:363.5px;" width="13" height="16" viewBox="0 0 13 16"><use href="#i-doc"/></svg>
<span class="t" style="left:42.4px;top:364.5px;letter-spacing:-0.01px;">Icc - Inter Cooler Calculation</span>
<svg class="a" style="left:10px;top:385px" width="7" height="10" viewBox="0 0 7 10"><path d="M1 1L5.5 5L1 9" fill="none" stroke="#a2a2a2" stroke-width="1.8"/></svg>
<svg class="a" style="left:24px;top:381.5px;" width="13" height="16" viewBox="0 0 13 16"><use href="#i-doc"/></svg>
<span class="t" style="left:42.4px;top:382.5px;letter-spacing:-0.14px;">Isc - Idle Speed Control</span>
<svg class="a" style="left:10px;top:403px" width="7" height="10" viewBox="0 0 7 10"><path d="M1 1L5.5 5L1 9" fill="none" stroke="#a2a2a2" stroke-width="1.8"/></svg>
<svg class="a" style="left:24px;top:399.5px;" width="13" height="16" viewBox="0 0 13 16"><use href="#i-doc"/></svg>
<span class="t" style="left:42.4px;top:400.5px;letter-spacing:0.06px;">Itc - Injection Time Calculation</span>
<svg class="a" style="left:8px;top:422px" width="10" height="7" viewBox="0 0 10 7"><path d="M1 1L5 5.5L9 1" fill="none" stroke="#333" stroke-width="1.5"/></svg>
<svg class="a" style="left:24px;top:417.5px;" width="13" height="16" viewBox="0 0 13 16"><use href="#i-doc"/></svg>
<span class="t" style="left:42.4px;top:418.5px;">Lcc - Lambda Correction Calculation</span>
<svg class="a" style="left:26.5px;top:439px" width="7" height="10" viewBox="0 0 7 10"><path d="M1 1L5.5 5L1 9" fill="none" stroke="#a2a2a2" stroke-width="1.8"/></svg>
<svg class="a" style="left:40px;top:435.5px;" width="13" height="16" viewBox="0 0 13 16"><use href="#i-doc"/></svg>
<span class="t" style="left:58.4px;top:436.5px;">Lambda Correction Calculation</span>
<svg class="a" style="left:26.5px;top:457px" width="7" height="10" viewBox="0 0 7 10"><path d="M1 1L5.5 5L1 9" fill="none" stroke="#a2a2a2" stroke-width="1.8"/></svg>
<svg class="a" style="left:40px;top:453.5px;" width="13" height="16" viewBox="0 0 13 16"><use href="#i-doc"/></svg>
<span class="t" style="left:58.4px;top:454.5px;letter-spacing:-0.09px;">[C-Code Source]</span>
<svg class="a" style="left:26.5px;top:475px" width="7" height="10" viewBox="0 0 7 10"><path d="M1 1L5.5 5L1 9" fill="none" stroke="#a2a2a2" stroke-width="1.8"/></svg>
<svg class="a" style="left:40px;top:471.5px;" width="13" height="16" viewBox="0 0 13 16"><use href="#i-doc"/></svg>
<span class="t" style="left:58.4px;top:472.5px;letter-spacing:-0.12px;">Systemconstant-Parameter-Variable-Clas</span>
<div class="a" style="left:35px;top:488px;width:150.5px;height:18px;background:#d6d6d6;"></div>
<svg class="a" style="left:37px;top:489px;" width="16" height="16" viewBox="0 0 16 16"><g transform="translate(1 1)" fill="none" stroke="#1f5673" stroke-width="1.2"><rect x="6.5" y=".5" width="6" height="4" fill="#fff"/><path d="M0 2.5H6.5M12.5 2.5H14"/><path d="M0 6.5H9.5V11.5"/><rect x=".5" y="9.5" width="5" height="4" fill="#fff"/><path d="M5.5 11.5H14"/></g></svg>
<span class="t" style="left:58.4px;top:490.5px;letter-spacing:-0.05px;">LambdaControl_Project</span>
<svg class="a" style="left:37px;top:507px;" width="16" height="16" viewBox="0 0 16 16"><g transform="translate(1 1)" fill="none" stroke="#1f5673" stroke-width="1.2"><rect x="6.5" y=".5" width="6" height="4" fill="#fff"/><path d="M0 2.5H6.5M12.5 2.5H14"/><path d="M0 6.5H9.5V11.5"/><rect x=".5" y="9.5" width="5" height="4" fill="#fff"/><path d="M5.5 11.5H14"/></g><rect x="7.5" y="8" width="9" height="8" fill="#fff"/></svg>
<span class="t" style="left:46.0px;top:512.0px;font-size:11px;font-weight:bold;color:#b8245e;">c</span>
<span class="t" style="left:58.4px;top:508.5px;letter-spacing:-0.22px;">Lcc</span>
<svg class="a" style="left:38px;top:525.5px" width="15" height="15" viewBox="0 0 15 15"><rect x="4.5" y="1.5" width="6.5" height="12" rx="1" fill="#d6e9f5" stroke="#1f5673" stroke-width="1.2"/><path d="M0 4.5H4M0 8H4M0 11.5H4M11.5 5H14M11.5 8.5H14M11.5 11H14" stroke="#1f5673" stroke-width="1.1" stroke-dasharray="2.2 .8"/></svg>
<span class="t" style="left:58.4px;top:526.5px;letter-spacing:-0.02px;">Function Overview</span>
<svg class="a" style="left:10px;top:547px" width="7" height="10" viewBox="0 0 7 10"><path d="M1 1L5.5 5L1 9" fill="none" stroke="#a2a2a2" stroke-width="1.8"/></svg>
<svg class="a" style="left:24px;top:543.5px;" width="13" height="16" viewBox="0 0 13 16"><use href="#i-doc"/></svg>
<span class="t" style="left:42.4px;top:544.5px;letter-spacing:0.12px;">Opm - Operation Mode</span>
<svg class="a" style="left:10px;top:565px" width="7" height="10" viewBox="0 0 7 10"><path d="M1 1L5.5 5L1 9" fill="none" stroke="#a2a2a2" stroke-width="1.8"/></svg>
<svg class="a" style="left:24px;top:561.5px;" width="13" height="16" viewBox="0 0 13 16"><use href="#i-doc"/></svg>
<span class="t" style="left:42.4px;top:562.5px;letter-spacing:-0.32px;">Sensors - Sensor Value Treatment</span>
<svg class="a" style="left:10px;top:583px" width="7" height="10" viewBox="0 0 7 10"><path d="M1 1L5.5 5L1 9" fill="none" stroke="#a2a2a2" stroke-width="1.8"/></svg>
<svg class="a" style="left:24px;top:579.5px;" width="13" height="16" viewBox="0 0 13 16"><use href="#i-doc"/></svg>
<span class="t" style="left:42.4px;top:580.5px;letter-spacing:-0.11px;">Stc - Starter Calculation</span>
<svg class="a" style="left:10px;top:601px" width="7" height="10" viewBox="0 0 7 10"><path d="M1 1L5.5 5L1 9" fill="none" stroke="#a2a2a2" stroke-width="1.8"/></svg>
<svg class="a" style="left:24px;top:597.5px;" width="13" height="16" viewBox="0 0 13 16"><use href="#i-doc"/></svg>
<span class="t" style="left:42.4px;top:598.5px;letter-spacing:0.06px;">T2t - Torque to throttle calculation</span>
<svg class="a" style="left:10px;top:619px" width="7" height="10" viewBox="0 0 7 10"><path d="M1 1L5.5 5L1 9" fill="none" stroke="#a2a2a2" stroke-width="1.8"/></svg>
<svg class="a" style="left:24px;top:615.5px;" width="13" height="16" viewBox="0 0 13 16"><use href="#i-doc"/></svg>
<span class="t" style="left:42.4px;top:616.5px;letter-spacing:-0.19px;">Tqs - Torque Structure</span>
<div class="a" style="left:3px;top:716px;width:272px;height:17px;background:#f0f0f0;"></div>
<div class="a" style="left:20px;top:718px;width:172px;height:13px;background:#cdcdcd;"></div>
<svg class="a" style="left:7px;top:720px" width="6" height="9" viewBox="0 0 6 9"><path d="M5 1L1.2 4.5L5 8" fill="none" stroke="#555" stroke-width="1.6"/></svg>
<svg class="a" style="left:264px;top:720px" width="6" height="9" viewBox="0 0 6 9"><path d="M1 1L4.8 4.5L1 8" fill="none" stroke="#555" stroke-width="1.6"/></svg>
</div>
<div class="a g" id="nav-outline" aria-label="Outline">
<div class="a" style="left:2px;top:736px;width:274px;height:33px;background:#ececec;border:1px solid #cfcfcf;box-sizing:border-box;"></div>
<div class="a" style="left:2px;top:737px;width:86.5px;height:32px;background:#fff;"></div>
<div class="a" style="left:88px;top:737px;width:1px;height:31px;background:#cfcfcf;"></div>
<svg class="a" style="left:8px;top:745px" width="14" height="14" viewBox="0 0 14 14"><g fill="#fff" stroke="#2d6f93" stroke-width="1.2"><rect x=".6" y=".6" width="4.5" height="4.5"/><rect x=".6" y="8.6" width="4.5" height="4.5"/></g><path d="M7.5 3H9.5M11 3H13.5M7.5 7H9.5M11 7H13.5M7.5 11H13.5" stroke="#2d6f93" stroke-width="1.3"/></svg>
<span class="t" style="left:27.5px;top:746.8px;-webkit-text-stroke:.45px;color:#555;letter-spacing:0.14px;">Outline</span>
<svg class="a" style="left:73.5px;top:747.5px" width="10" height="10" viewBox="0 0 10 10"><path d="M1 1L9 9M9 1L1 9" stroke="#000" stroke-width="2.3" fill="none"/></svg>
<svg class="a" style="left:234.5px;top:743px" width="36" height="12" viewBox="0 0 36 12"><g fill="#fff" stroke="#555" stroke-width="1"><rect x=".5" y=".5" width="9" height="3"/><rect x="23.5" y=".5" width="9" height="9"/><path d="M23.5 2.5H32.5"/></g></svg>
<div class="a" style="left:2px;top:769px;width:274px;height:220px;background:#fff;border:1px solid #d0d0d0;box-sizing:border-box;border-top:none;"></div>
</div>
<div class="a g" id="nav-status" aria-label="Status bar">
<div class="a" style="left:2px;top:988px;width:1104px;height:1px;background:#d9d9d9;"></div>
<div class="a" style="left:0px;top:1039px;width:1106px;height:1px;background:#8c8c8c;"></div>
<span class="t" style="left:9.0px;top:996.8px;letter-spacing:-0.58px;">EHANDBOOK_NAVIGATOR License</span>
<svg class="a" style="left:199.5px;top:995px;" width="2" height="16" viewBox="0 0 2 16"><rect x="0" y="1.5" width="2" height="2" fill="#d6d6d6"/><rect x="0" y="5.5" width="2" height="2" fill="#d6d6d6"/><rect x="0" y="9.5" width="2" height="2" fill="#d6d6d6"/><rect x="0" y="13.5" width="2" height="2" fill="#d6d6d6"/></svg>
<span class="t" style="left:206.7px;top:996.8px;letter-spacing:-0.42px;">Data Source:</span>
<div class="a" style="left:277px;top:993px;width:207px;height:20px;background:#fff;border:1px solid #adadad;box-sizing:border-box;"></div>
<span class="t" style="left:281.5px;top:996.8px;letter-spacing:-0.15px;">INCA Experiment (Live)</span>
<svg class="a" style="left:469px;top:1001px;" width="7" height="4" viewBox="0 0 7 4"><path d="M0 0H7L3.5 4Z" fill="#111"/></svg>
<svg class="a" style="left:491.5px;top:996.5px" width="14" height="14" viewBox="0 0 16 16"><g transform="translate(8 8)"><g fill="#222"><rect x="-1.6" y="-8" width="3.2" height="16" transform="rotate(0)"/><rect x="-1.6" y="-8" width="3.2" height="16" transform="rotate(45)"/><rect x="-1.6" y="-8" width="3.2" height="16" transform="rotate(90)"/><rect x="-1.6" y="-8" width="3.2" height="16" transform="rotate(135)"/></g><circle r="5.3" fill="#222"/><circle r="2.2" fill="#fff"/></g></svg>
<svg class="a" style="left:512px;top:996px" width="18" height="14" viewBox="0 0 18 14"><path d="M1 6.5L10 1L17 4.5V8L8 13L1 9.5Z" fill="#4f94d8" stroke="#2a66a8" stroke-width="1"/><path d="M1 6.5L10 1L17 4.5L8 10Z" fill="#6fb0ea"/><path d="M1 6.5L8 10L17 4.5" fill="none" stroke="#b5d6f4" stroke-width="1"/></svg>
<div class="a" style="left:535px;top:995px;width:1px;height:17px;background:#a0a0a0;"></div>
<svg class="a" style="left:545px;top:996px;" width="16" height="16" viewBox="0 0 16 16"><g fill="none" stroke="#b5b5b5" stroke-width="1.1"><rect x="3.5" y=".5" width="11" height="9.5" fill="#f4f4f4"/><path d="M6 2V7.5M9 2V7.5M12 2V7.5M4.8 3.5H7.2M7.8 5.5H10.2M10.8 3H13.2"/><rect x=".5" y="7.5" width="11" height="6" fill="#f4f4f4"/><path d="M3 13.5V11M5.5 13.5V11M8 13.5V11"/></g></svg>
<svg class="a" style="left:568px;top:996px;" width="16" height="16" viewBox="0 0 16 16"><g fill="none" stroke="#2a5f86" stroke-width="1.1"><rect x="3.5" y=".5" width="11" height="9.5" fill="#e8f2fa"/><path d="M6 2V7.5M9 2V7.5M12 2V7.5M4.8 3.5H7.2M7.8 5.5H10.2M10.8 3H13.2"/><rect x=".5" y="7.5" width="11" height="6" fill="#e8f2fa"/><path d="M3 13.5V11M5.5 13.5V11M8 13.5V11"/></g><circle cx="11" cy="10.5" r="4.2" fill="#f3c060" stroke="#a8781c" stroke-width=".9"/><path d="M9 8.5L13 12.5M13 8.5L9 12.5" stroke="#8a5c0a" stroke-width="1"/></svg>
<svg class="a" style="left:590px;top:996px;" width="16" height="16" viewBox="0 0 16 16"><g fill="none" stroke="#b5b5b5" stroke-width="1.1"><rect x="3.5" y=".5" width="11" height="9.5" fill="#f4f4f4"/><path d="M6 2V7.5M9 2V7.5M12 2V7.5M4.8 3.5H7.2M7.8 5.5H10.2M10.8 3H13.2"/><rect x=".5" y="7.5" width="11" height="6" fill="#f4f4f4"/><path d="M3 13.5V11M5.5 13.5V11M8 13.5V11"/></g></svg>
<svg class="a" style="left:614px;top:997px" width="14" height="13" viewBox="0 0 14 13"><path d="M1.5 1.2L12.5 6.5L1.5 11.8Z" fill="#6cc46c" stroke="#2f8a45" stroke-width="1.1" stroke-linejoin="round"/></svg>
<div class="a" style="left:639px;top:998px;width:12px;height:11px;background:#b4b4b4;border:1px solid #9a9a9a;box-sizing:border-box;"></div>
<svg class="a" style="left:658px;top:995px;" width="2" height="16" viewBox="0 0 2 16"><rect x="0" y="1.5" width="2" height="2" fill="#d6d6d6"/><rect x="0" y="5.5" width="2" height="2" fill="#d6d6d6"/><rect x="0" y="9.5" width="2" height="2" fill="#d6d6d6"/><rect x="0" y="13.5" width="2" height="2" fill="#d6d6d6"/></svg>
<svg class="a" style="left:10px;top:1018px" width="15" height="15" viewBox="0 0 15 15"><rect x=".6" y=".6" width="13.8" height="13.8" fill="#fff" stroke="#6e8aa0" stroke-width="1.2"/><path d="M3 4H12M3 6.5H12M3 9H12M3 11.5H9" stroke="#9db3c4" stroke-width="1"/></svg>
<div class="a" style="left:29px;top:1014px;width:23px;height:21px;background:#cce4f7;"></div>
<svg class="a" style="left:2px;top:1017px;" width="2" height="16" viewBox="0 0 2 16"><rect x="0" y="1.5" width="2" height="2" fill="#d6d6d6"/><rect x="0" y="5.5" width="2" height="2" fill="#d6d6d6"/><rect x="0" y="9.5" width="2" height="2" fill="#d6d6d6"/><rect x="0" y="13.5" width="2" height="2" fill="#d6d6d6"/></svg>
<svg class="a" style="left:34px;top:1018px" width="15" height="15" viewBox="0 0 15 15"><rect x=".6" y=".6" width="13.8" height="13.8" fill="#fff" stroke="#44596a" stroke-width="1.2"/><rect x="1.2" y="1.2" width="5" height="12.6" fill="#8c9baa"/><path d="M8 4H12.5M8 6.5H12.5M8 9H12.5" stroke="#8aa0b2" stroke-width="1"/></svg>
<svg class="a" style="left:56.5px;top:1018px" width="15" height="15" viewBox="0 0 15 15"><rect x=".6" y=".6" width="13.8" height="13.8" fill="#fff" stroke="#6e8aa0" stroke-width="1.2"/><circle cx="9" cy="7" r="2.2" fill="#8aa6c8" stroke="#5f7fa8" stroke-width=".6"/><path d="M5.5 13.8C5.5 9 12.5 9 12.5 13.8Z" fill="#9fb6d2" stroke="#5f7fa8" stroke-width=".6"/></svg>
<div class="a" style="left:78px;top:1015px;width:1px;height:21px;background:#a0a0a0;"></div>
<div class="a" style="left:85px;top:1024.5px;width:12px;height:2px;background:#27408b;"></div>
<div class="a" style="left:108px;top:1024.5px;width:12px;height:2px;background:#27408b;"></div>
<div class="a" style="left:113px;top:1019.5px;width:2px;height:12px;background:#27408b;"></div>
<span class="t" style="left:130.5px;top:1016.8px;font-size:8.5px;font-weight:bold;color:#27408b;letter-spacing:-0.73px;">100</span>
<span class="t" style="left:131.5px;top:1023.8px;font-size:11.5px;font-weight:bold;color:#27408b;">%</span>
<svg class="a" style="left:154px;top:1019px" width="13" height="13" viewBox="0 0 13 13"><g fill="#27408b"><path d="M0 0H5L3.4 1.6L5.6 3.8L3.8 5.6L1.6 3.4L0 5Z"/><path d="M13 0V5L11.4 3.4L9.2 5.6L7.4 3.8L9.6 1.6L8 0Z"/><path d="M0 13V8L1.6 9.6L3.8 7.4L5.6 9.2L3.4 11.4L5 13Z"/><path d="M13 13H8L9.6 11.4L7.4 9.2L9.2 7.4L11.4 9.6L13 8Z"/></g></svg>
</div>
<div class="a g" id="nav-diagram" aria-label="LambdaControl_Project diagram">
<svg class="a" style="left:0;top:0" width="1106" height="1040" viewBox="0 0 1106 1040"><style>.dw,.sw{fill:none;stroke:var(--lc,#1a1a1a);stroke-width:var(--sw,1)}.dw{stroke-dasharray:var(--da,4.6 2.4)}.b{stroke-width:var(--swb,1.9)}.bk{fill:var(--bf,#fff);stroke:var(--lc,#1a1a1a);stroke-width:var(--sw,1)}.sub{fill:var(--bf,#fff);stroke:var(--sc,#555);stroke-width:var(--ssw,1)}.bx{stroke-width:var(--sw,1.2)}text{font-family:"Liberation Sans",sans-serif}</style><defs><g id="dg"><path class="dw" d="M356.5 254.5H949.5Q953.5 254.5 953.5 258.5V554.5M657.5 254.5V634.5Q657.5 638.5 662.5 638.5H684.5M657.5 390.5H684.5M504.5 342.5H583.5M611.5 342.5H771.5M791.5 342.5H941.5Q945.5 342.5 945.5 346.5V554.5M665.5 342.5V617.5Q665.5 622.5 669.5 622.5H684.5M665.5 398.5H684.5M356.5 310.5H436.5M456.5 310.5H469.5Q473.5 310.5 473.5 314.5V330.5Q473.5 334.5 477.5 334.5H484.5M356.5 342.5H484.5M356.5 374.5H436.5M456.5 374.5H469.5Q473.5 374.5 473.5 370.5V354.5Q473.5 350.5 477.5 350.5H484.5M639.5 454.5H684.5"/><path class="dw b" d="M356.5 254.5H657.5V390.5M611.5 342.5H665.5"/><path class="sw" d="M356.5 438.5H577.5Q582.5 438.5 582.5 442.5T587.5 446.5H619.5M449.5 438.5V682.5Q449.5 686.5 454.5 686.5H684.5M356.5 470.5H577.5Q582.5 470.5 582.5 466.5T587.5 462.5H619.5M433.5 470.5V698.5Q433.5 702.5 437.5 702.5H684.5M347.5 510.5H684.5M417.5 510.5V714.5Q417.5 718.5 422.5 718.5H684.5M473.5 510.5V546.5Q473.5 550.5 477.5 550.5H555.5M551.5 526.5H603.5M519.5 566.5H555.5M575.5 558.5H613.5Q617.5 558.5 617.5 554.5V539.5M623.5 526.5H684.5M649.5 526.5V665.5Q649.5 670.5 654.5 670.5H684.5M347.5 734.5H684.5M832.5 566.5H927.5M832.5 797.5H853.5Q857.5 797.5 857.5 793.5V578.5Q857.5 574.5 862.5 574.5H927.5M895.5 590.5H907.5Q912.5 590.5 912.5 586.5T917.5 582.5H927.5M955.5 574.5H998.5M1027.5 574.5H1035.5"/><path class="sw b" d="M356.5 438.5H449.5M356.5 470.5H433.5M347.5 510.5H473.5M623.5 526.5H649.5"/><g fill="#000"><path d="M687.5 638.5l-4 -3v6z"/><path d="M687.5 390.5l-4 -3v6z"/><path d="M586.5 342.5l-4 -3v6z"/><path d="M775 342.5l-4 -3v6z"/><path d="M687.5 622.5l-4 -3v6z"/><path d="M687.5 398.5l-4 -3v6z"/><path d="M439.5 310.5l-4 -3v6z"/><path d="M487.5 334.5l-4 -3v6z"/><path d="M487.5 342.5l-4 -3v6z"/><path d="M439.5 374.5l-4 -3v6z"/><path d="M487.5 350.5l-4 -3v6z"/><path d="M687.5 454.5l-4 -3v6z"/><path d="M623 446.5l-4 -3v6z"/><path d="M687.5 686.5l-4 -3v6z"/><path d="M623 462.5l-4 -3v6z"/><path d="M687.5 702.5l-4 -3v6z"/><path d="M687.5 510.5l-4 -3v6z"/><path d="M687.5 718.5l-4 -3v6z"/><path d="M559 550.5l-4 -3v6z"/><path d="M607 526.5l-4 -3v6z"/><path d="M559 566.5l-4 -3v6z"/><path d="M687.5 526.5l-4 -3v6z"/><path d="M687.5 670.5l-4 -3v6z"/><path d="M687.5 734.5l-4 -3v6z"/><path d="M931 566.5l-4 -3v6z"/><path d="M931 574.5l-4 -3v6z"/><path d="M931 582.5l-4 -3v6z"/><path d="M1002 574.5l-4 -3v6z"/><path d="M953.5 558.5l-3 -4h6z"/><path d="M945.5 558.5l-3 -4h6z"/><path d="M617.5 534.5l-3 4h6z"/><path d="M654.3 254.5l3.2 -3.2l3.2 3.2l-3.2 3.2z"/><path d="M662.3 342.5l3.2 -3.2l3.2 3.2l-3.2 3.2z"/><path d="M654.3 390.5l3.2 -3.2l3.2 3.2l-3.2 3.2z"/><path d="M662.3 398.5l3.2 -3.2l3.2 3.2l-3.2 3.2z"/><path d="M446.3 438.5l3.2 -3.2l3.2 3.2l-3.2 3.2z"/><path d="M430.3 470.5l3.2 -3.2l3.2 3.2l-3.2 3.2z"/><path d="M414.3 510.5l3.2 -3.2l3.2 3.2l-3.2 3.2z"/><path d="M470.3 510.5l3.2 -3.2l3.2 3.2l-3.2 3.2z"/><path d="M646.3 526.5l3.2 -3.2l3.2 3.2l-3.2 3.2z"/></g><rect x="331.5" y="250.5" width="24" height="8" class="bk"/><rect x="331" y="250" width="5" height="9" fill="#000"/><path d="M340.5 254.5l3.2 -2.8l3.2 2.8l-3.2 2.8z" fill="#a9c0e4" stroke="#7f9ccc" stroke-width=".6"/><rect x="331.5" y="306.5" width="15" height="8" class="bk"/><path d="M334.5 307.5h9l-7 6h-2z" fill="#dba9ad"/><path d="M347 306v9l9 -4.5z" fill="#000"/><rect x="331.5" y="338.5" width="24" height="8" class="bk"/><rect x="331" y="338" width="5" height="9" fill="#000"/><path d="M340.5 342.5l3.2 -2.8l3.2 2.8l-3.2 2.8z" fill="#a9c0e4" stroke="#7f9ccc" stroke-width=".6"/><rect x="331.5" y="370.5" width="15" height="8" class="bk"/><path d="M334.5 371.5h9l-7 6h-2z" fill="#dba9ad"/><path d="M347 370v9l9 -4.5z" fill="#000"/><rect x="331.5" y="434.5" width="15" height="8" class="bk"/><path d="M334.5 435.5h9l-7 6h-2z" fill="#dba9ad"/><path d="M347 434v9l9 -4.5z" fill="#000"/><rect x="331.5" y="466.5" width="15" height="8" class="bk"/><path d="M334.5 467.5h9l-7 6h-2z" fill="#dba9ad"/><path d="M347 466v9l9 -4.5z" fill="#000"/><rect x="323.5" y="506.5" width="15" height="8" class="bk"/><path d="M326.5 507.5h9l-7 6h-2z" fill="#dba9ad"/><path d="M339 506v9l9 -4.5z" fill="#000"/><rect x="323.5" y="730.5" width="15" height="8" class="bk"/><path d="M326.5 731.5h9l-7 6h-2z" fill="#dba9ad"/><path d="M339 730v9l9 -4.5z" fill="#000"/><rect x="587.5" y="338.5" width="16" height="8" class="bk"/><rect x="587" y="338" width="5.5" height="9" fill="#000"/><path d="M594 339.5h8l-6 6h-2z" fill="#dba9ad"/><path d="M603.5 338.5v8l8 -4z" fill="#fff" stroke="#000" stroke-width="1"/><rect x="1003" y="570.5" width="16" height="8" class="bk"/><rect x="1002.5" y="570" width="5.5" height="9" fill="#000"/><path d="M1009.5 571.5h8l-6 6h-2z" fill="#dba9ad"/><path d="M1019 570.5v8l8 -4z" fill="#000" stroke="#000" stroke-width="1"/><rect x="439.5" y="302.5" width="16" height="16" class="bk bx"/><rect x="439.5" y="366.5" width="16" height="16" class="bk bx"/><rect x="775.5" y="334.5" width="16" height="16" class="bk bx"/><rect x="487.5" y="326.5" width="16" height="31" class="bk bx"/><rect x="623.5" y="442.5" width="16" height="23" class="bk bx"/><rect x="607.5" y="518.5" width="16" height="16" class="bk bx"/><rect x="559.5" y="546.5" width="16" height="23" class="bk bx"/><rect x="931.5" y="558.5" width="24" height="31" class="bk bx"/><rect x="519.5" y="519.5" width="32" height="13" class="bk bx"/><rect x="487.5" y="559.5" width="32" height="13" class="bk bx"/><rect x="863.5" y="583.5" width="32" height="13" class="bk bx"/><rect x="687.5" y="378.5" width="144" height="207.5" class="sub"/><rect x="689" y="380" width="141" height="204.5" fill="none" stroke="#a9a9a9" stroke-width="var(--sg,2)"/><rect x="690.5" y="381.5" width="138" height="201.5" fill="none" stroke="#1a1a1a" stroke-width="var(--si,1)"/><rect x="687.5" y="610.5" width="144" height="207.5" class="sub"/><rect x="689" y="612" width="141" height="204.5" fill="none" stroke="#a9a9a9" stroke-width="var(--sg,2)"/><rect x="690.5" y="613.5" width="138" height="201.5" fill="none" stroke="#1a1a1a" stroke-width="var(--si,1)"/><rect x="681.5" y="373.5" width="15" height="12" rx="3.2" fill="#fff" stroke="#111" stroke-width="1.2"/><path d="M684.5 379.5h9M689 375.5v8" stroke="#000" stroke-width="2.6"/><rect x="681.5" y="605.5" width="15" height="12" rx="3.2" fill="#fff" stroke="#111" stroke-width="1.2"/><path d="M684.5 611.5h9M689 607.5v8" stroke="#000" stroke-width="2.6"/></g><clipPath id="oc"><rect x="5" y="772" width="268" height="213"/></clipPath></defs><use href="#dg"/><text x="339.7" y="265.8" fill="#1a1a86" font-size="9" textLength="106.3" lengthAdjust="spacingAndGlyphs">Lcc_flgSwitch2PIDController</text><text x="339.7" y="277" fill="#222" font-size="9" textLength="28.3" lengthAdjust="spacingAndGlyphs">[-] grad</text><text x="311.7" y="321.7" fill="#1a1a86" font-size="9" textLength="65.8" lengthAdjust="spacingAndGlyphs">Isc_flgFuelCutoff</text><text x="311.7" y="332.8" fill="#222" font-size="9" textLength="28.3" lengthAdjust="spacingAndGlyphs">[-] grad</text><text x="315" y="353.8" fill="#1a1a86" font-size="9" textLength="107.5" lengthAdjust="spacingAndGlyphs">Lcc_flgLambdaControlActive</text><text x="315" y="364.7" fill="#222" font-size="9" textLength="28.3" lengthAdjust="spacingAndGlyphs">[-] grad</text><text x="303.3" y="385.8" fill="#1a1a86" font-size="9" textLength="82.7" lengthAdjust="spacingAndGlyphs">Stc_flgFuelCorrActive</text><text x="303.3" y="397" fill="#222" font-size="9" textLength="28.3" lengthAdjust="spacingAndGlyphs">[-] grad</text><text x="530.8" y="330" fill="#222" font-size="9" textLength="42.2" lengthAdjust="spacingAndGlyphs">/1/Lcc_calc</text><text x="542.5" y="353.8" fill="#1a1a86" font-size="9" textLength="114.5" lengthAdjust="spacingAndGlyphs">Lcc_flgLambdacontrolActive_1</text><text x="542.5" y="364.7" fill="#222" font-size="9" textLength="28.3" lengthAdjust="spacingAndGlyphs">[-] grad</text><text x="329.7" y="449.7" fill="#1a1a86" font-size="9" textLength="30.3" lengthAdjust="spacingAndGlyphs">Lamsoni</text><text x="329.7" y="461.3" fill="#222" font-size="9" textLength="30.6" lengthAdjust="spacingAndGlyphs">[-] g/km</text><text x="307.5" y="481.8" fill="#1a1a86" font-size="9" textLength="73.8" lengthAdjust="spacingAndGlyphs">Afr_facLambdaReq</text><text x="307.5" y="493.5" fill="#222" font-size="9" textLength="30.6" lengthAdjust="spacingAndGlyphs">[-] g/km</text><text x="304.7" y="521.7" fill="#1a1a86" font-size="9" textLength="63.3" lengthAdjust="spacingAndGlyphs">Epm_rpmEngSpd</text><text x="304.7" y="533" fill="#222" font-size="9" textLength="33.5" lengthAdjust="spacingAndGlyphs">[-] U/min</text><text x="310.3" y="745.9" fill="#1a1a86" font-size="9" textLength="52.7" lengthAdjust="spacingAndGlyphs">Mpc_pManiFilt</text><text x="310.3" y="757.7" fill="#222" font-size="9" textLength="17" lengthAdjust="spacingAndGlyphs">[-] V</text><text x="691.7" y="390.8" fill="#1a1a86" font-size="9" textLength="106.3" lengthAdjust="spacingAndGlyphs">Lcc_flgSwitch2PIDController</text><text x="691.7" y="398.3" fill="#1a1a86" font-size="9" textLength="6" lengthAdjust="spacingAndGlyphs">in</text><text x="691.7" y="454.7" fill="#1a1a86" font-size="9" textLength="10.5" lengthAdjust="spacingAndGlyphs">in1</text><text x="691.7" y="511.3" fill="#1a1a86" font-size="9" textLength="63.3" lengthAdjust="spacingAndGlyphs">Epm_rpmEngSpd</text><text x="691.7" y="526.7" fill="#1a1a86" font-size="9" textLength="7" lengthAdjust="spacingAndGlyphs">dt</text><text x="722.5" y="441.7" fill="#1a1a86" font-size="9" textLength="77" lengthAdjust="spacingAndGlyphs">Two-point-controller</text><text x="739.7" y="568" fill="#1a1a86" font-size="9" textLength="89.3" lengthAdjust="spacingAndGlyphs">Lcc_facLambdaTPCCorr</text><text x="691.7" y="622.7" fill="#1a1a86" font-size="9" textLength="6" lengthAdjust="spacingAndGlyphs">in</text><text x="691.7" y="639" fill="#1a1a86" font-size="9" textLength="106.3" lengthAdjust="spacingAndGlyphs">Lcc_flgSwitch2PIDController</text><text x="691.7" y="670.7" fill="#1a1a86" font-size="9" textLength="7" lengthAdjust="spacingAndGlyphs">dt</text><text x="691.7" y="686.8" fill="#1a1a86" font-size="9" textLength="30.3" lengthAdjust="spacingAndGlyphs">Lamsoni</text><text x="691.7" y="702.7" fill="#1a1a86" font-size="9" textLength="73.8" lengthAdjust="spacingAndGlyphs">Afr_facLambdaReq</text><text x="691.7" y="718.5" fill="#1a1a86" font-size="9" textLength="63.3" lengthAdjust="spacingAndGlyphs">Epm_rpmEngSpd</text><text x="691.7" y="734.3" fill="#1a1a86" font-size="9" textLength="52.7" lengthAdjust="spacingAndGlyphs">Mpc_pManiFilt</text><text x="733.7" y="657.7" fill="#1a1a86" font-size="9" textLength="54.1" lengthAdjust="spacingAndGlyphs">PID-Controller</text><text x="720" y="799.5" fill="#1a1a86" font-size="9" textLength="109" lengthAdjust="spacingAndGlyphs">Lcc_facLambdaPIDController</text><text x="963" y="562" fill="#222" font-size="9" textLength="42.3" lengthAdjust="spacingAndGlyphs">/6/Lcc_calc</text><text x="979.7" y="585.8" fill="#1a1a86" font-size="9" textLength="74.8" lengthAdjust="spacingAndGlyphs">Lcc_facLambdaCorr</text><text x="979.7" y="597.2" fill="#222" font-size="9" textLength="30.6" lengthAdjust="spacingAndGlyphs">[-] g/km</text><text x="535.5" y="529.5" fill="#1a1a86" font-size="9" text-anchor="middle">40</text><text x="503.5" y="569.5" fill="#1a1a86" font-size="9" text-anchor="middle">1.0</text><text x="879.5" y="593.5" fill="#1a1a86" font-size="9" text-anchor="middle">1.0</text><text x="448" y="315" fill="#5a5a8c" font-size="13" text-anchor="middle" font-weight="bold">!</text><text x="448" y="380" fill="#5a5a8c" font-size="13" text-anchor="middle" font-weight="bold">!</text><text x="783.5" y="347.5" fill="#5a5a8c" font-size="13" text-anchor="middle" font-weight="bold">!</text><text x="496" y="346" fill="#5a5a8c" font-size="9" text-anchor="middle" font-weight="bold">&amp;</text><text x="631.5" y="459.5" fill="#5a5a8c" font-size="15" text-anchor="middle" font-weight="bold">&lt;</text><text x="615.5" y="531.5" fill="#5a5a8c" font-size="15" text-anchor="middle" font-weight="bold">÷</text><text x="568" y="562.5" fill="#585898" font-size="11.5" textLength="18" lengthAdjust="spacingAndGlyphs" text-anchor="middle" font-weight="bold">MX</text><rect x="936.5" y="568" width="3" height="3" fill="#fff" stroke="#2e9a2e" stroke-width="1.2"/><rect x="936.3" y="577" width="3.4" height="3.4" fill="#9a9ac8" stroke="#7a7ab0" stroke-width=".6"/><path d="M941 569.5C945 569.5 945 575.5 948 575.5H951.5" fill="none" stroke="#2e9a2e" stroke-width="1.6"/><rect x="3" y="769" width="272" height="219" fill="#e2e7fb"/><rect x="273" y="769" width="2.5" height="219" fill="#8d90a0"/><rect x="20.5" y="772" width="252.5" height="213" fill="#c9d3f8"/><g clip-path="url(#oc)"><g transform="translate(-66.4 718.8) scale(0.309)" style="--bf:#e6e6fa;--sw:3.9;--swb:4.8;--ssw:6.8;--da:13 7;--sc:#0a0a14;--lc:#05050f;--sg:0;--si:0"><use href="#dg"/></g></g><rect x="5" y="772.5" width="268" height="212.5" fill="none" stroke="#0c1440" stroke-width="1.8"/><path d="M20.5 769V988" stroke="#222" stroke-width="1"/><ellipse cx="5.5" cy="773" rx="3" ry="2.2" fill="#888" stroke="#111" stroke-width="1"/><rect x="260" y="986" width="12" height="2" fill="#5f7fd0"/></svg>
</div>
</div>
<svg class="a" style="left:1067px;top:253px" width="14" height="22" viewBox="0 0 14 22"><path d="M1 1V17L4.8 13.4L7.6 20L10 19L7.2 12.6H12.5Z" fill="#fff" stroke="#000" stroke-width="1"/></svg>
<div class="a g" id="inca-window" aria-label="INCA Experiment">
<div class="a g" id="inca-chrome" aria-label="Title bar, menu, toolbar, status">
<div class="a" style="left:1088px;top:0px;width:18px;height:1040px;background:linear-gradient(90deg,rgba(0,0,0,0),rgba(0,0,0,.03) 45%,rgba(0,0,0,.08) 75%,rgba(0,0,0,.17));"></div>
<div class="a" style="left:1106px;top:0px;width:814px;height:1040px;background:#fff;border:1px solid #555;box-sizing:border-box;"></div>
<svg class="a" style="left:1115px;top:9px" width="16" height="13" viewBox="0 0 17 14"><rect x=".7" y=".7" width="15.6" height="12.6" rx="1.5" fill="#cfe0ee" stroke="#27406b" stroke-width="1.4"/><rect x="3" y="3" width="9" height="8" fill="#3c9a74" stroke="#1f5a49" stroke-width=".8"/><path d="M4.5 9V5M6.5 9V6M8.5 9V4.5M10.5 9V6" stroke="#d7f5e6" stroke-width="1"/><path d="M13.8 4V10" stroke="#27406b" stroke-width="1.2"/></svg>
<span class="t" style="left:1139.7px;top:9.5px;letter-spacing:-0.16px;">Experiment: &gt;New experiment&lt; Hardware: &gt;Workspace_FLEX&lt;</span>
<svg class="a" style="left:1795px;top:5px" width="115" height="20" viewBox="0 0 115 20"><g fill="none" stroke="#000" stroke-width="1.1"><path d="M5 10.5H15"/><rect x="50.5" y="5.5" width="10" height="10"/><path d="M96 5.5L106 15.5M106 5.5L96 15.5"/></g></svg>
<span class="t" style="left:1114.7px;top:34.5px;letter-spacing:-0.16px;">Experiment</span>
<span class="t" style="left:1188.3px;top:34.5px;letter-spacing:-0.24px;">Edit</span>
<span class="t" style="left:1222.5px;top:34.5px;letter-spacing:-0.32px;">View</span>
<span class="t" style="left:1261.3px;top:34.5px;letter-spacing:-0.38px;">Variables</span>
<span class="t" style="left:1321.7px;top:34.5px;letter-spacing:-0.10px;">Measurement</span>
<span class="t" style="left:1408.3px;top:34.5px;letter-spacing:-0.17px;">Hardware</span>
<span class="t" style="left:1473.8px;top:34.5px;letter-spacing:-0.52px;">Dataset</span>
<span class="t" style="left:1526.7px;top:34.5px;letter-spacing:0.03px;">Components</span>
<span class="t" style="left:1609.5px;top:34.5px;letter-spacing:0.08px;">Instrument</span>
<span class="t" style="left:1681.4px;top:34.5px;letter-spacing:0.15px;">Window</span>
<span class="t" style="left:1739.5px;top:34.5px;">?</span>
<div class="a" style="left:1142px;top:51px;width:776px;height:34px;background:#fff;border:1px solid #bdbdbd;box-sizing:border-box;border-top:2px solid #b4b4b4;border-bottom:2px solid #c8c8c8;"></div>
<div class="a" style="left:1143px;top:53px;width:231px;height:30px;background:#efefef;"></div>
<div class="a" style="left:1374px;top:53px;width:1px;height:30px;background:#cfcfcf;"></div>
<div class="a" style="left:1375px;top:53px;width:32px;height:30px;background:#f5f5f5;"></div>
<div class="a" style="left:1407px;top:53px;width:1px;height:30px;background:#cfcfcf;"></div>
<svg class="a" style="left:1146px;top:58px" width="22" height="21" viewBox="0 0 22 21"><defs><linearGradient id="ba" x1="0" y1="0" x2="0" y2="1"><stop offset="0" stop-color="#5aa2f0"/><stop offset="1" stop-color="#1457c4"/></linearGradient></defs><path d="M1 6H10V1L21 10.5L10 20V15H1Z" fill="url(#ba)" stroke="#0d3f94" stroke-width="1"/></svg>
<span class="t" style="left:1168.3px;top:54.5px;letter-spacing:-1.08px;">ETKC:1</span>
<span class="t" style="left:1168.3px;top:69.6px;letter-spacing:-0.83px;">EHANDBOOK_FlexECU_DEMO_ASCET</span>
<svg class="a" style="left:1380px;top:59px" width="22" height="18" viewBox="0 0 22 18"><g fill="#e4e4e4" stroke="#c4c4c4" stroke-width="1"><path d="M5.5 .8L.8 6H3.5V10H7.5V6H10.2Z"/><path d="M16.5 17.2L11.8 12H14.5V8H18.5V12H21.2Z"/></g><path d="M3.5 12H7.5M3.5 14.5H7.5M14.5 3.5H18.5M14.5 6H18.5" stroke="#c9c9c9" stroke-width="1.2"/></svg>
<svg class="a" style="left:1409px;top:53px" width="16" height="30" viewBox="0 0 16 30"><circle cx="7.5" cy="7.8" r="6" fill="#fff" stroke="#333" stroke-width="1"/><circle cx="7.5" cy="22.3" r="6" fill="#fff" stroke="#333" stroke-width="1"/><circle cx="7.5" cy="22.3" r="3.4" fill="#222"/></svg>
<span class="t" style="left:1428.7px;top:54.3px;letter-spacing:-0.89px;">WP:</span>
<span class="t" style="left:1456.7px;top:54.3px;letter-spacing:-0.92px;">DA_MDG1G_4S_19A030D_I44_1</span>
<span class="t" style="left:1428.7px;top:69.3px;font-weight:bold;letter-spacing:-0.39px;">RP:</span>
<span class="t" style="left:1456.7px;top:69.3px;letter-spacing:-0.85px;">DA_MDG1G_4S_19A030D_I44</span>
<div class="a" style="left:1626px;top:53px;width:1px;height:30px;background:#cfcfcf;"></div>
<span class="t" style="left:1633.3px;top:61.8px;letter-spacing:0.07px;">Diff.: 0</span>
<span class="t" style="left:1676.0px;top:61.8px;letter-spacing:-0.54px;">ETK OFF - No access</span>
<div class="a" style="left:1142px;top:87px;width:776px;height:1px;background:#7d7d7d;"></div>
<div class="a" style="left:1142px;top:88px;width:775.5px;height:923px;background:#ababab;"></div>
<div class="a" style="left:1142px;top:88px;width:1.5px;height:923px;background:#8e8e8e;"></div>
<div class="a" style="left:1142px;top:1014px;width:777px;height:25px;background:#f0f0f0;"></div>
<div class="a" style="left:1107px;top:1004px;width:34.5px;height:1px;background:#d9d9d9;"></div>
<div class="a" style="left:1142px;top:1011px;width:776px;height:3px;background:#fff;"></div>
<div class="a" style="left:1107px;top:1039px;width:813px;height:1px;background:#4a4a4a;"></div>
<span class="t" style="left:1144.0px;top:1020.3px;letter-spacing:-0.02px;">Measurement stopped</span>
<div class="a" style="left:1748px;top:1014px;width:1px;height:25px;background:#a0a0a0;"></div>
<span class="t" style="left:1778.3px;top:1019.6px;color:#3d7d3d;letter-spacing:-0.09px;">Max. buffer level: 0%</span>
<svg class="a" style="left:1115px;top:1009px" width="24" height="26" viewBox="0 0 24 26"><g fill="#f07a2c" stroke="#a8380c" stroke-width="1"><path d="M6.5 1.5H12.5V6H17.5V10.5H13.5V12.5H5.5V10.5H2.5V6H6.5Z"/><path d="M2.5 15.5H12V19H10V24.5H6V19H2.5Z"/></g><circle cx="16.4" cy="19" r="5" fill="#f4e23a" stroke="#a89a12" stroke-width="1"/><text x="16.4" y="22.3" font-size="9" font-weight="bold" text-anchor="middle" fill="#2a2400" font-family="Liberation Sans,sans-serif">?</text></svg>
</div>
<div class="a g" id="inca-sidebar" aria-label="Side toolbar">
<svg class="a" style="left:1114px;top:56px;" width="22" height="24" viewBox="0 0 22 24"><path d="M3.5 2.5H14L20.5 9V22.5H3.5Z" fill="#fbfcfe" stroke="#8f9db0" stroke-width="1"/><path d="M14 2.5V9H20.5" fill="#e1e7f0" stroke="#8f9db0" stroke-width="1"/><circle cx="5.5" cy="6" r="4" fill="#f9b949" stroke="#ee9420" stroke-width="1.4" stroke-dasharray="1.6 1"/></svg>
<svg class="a" style="left:1114px;top:87px;" width="24" height="22" viewBox="0 0 24 22"><path d="M5 7L19 3.5L22 17L8 20.5Z" fill="#f3e27a" stroke="#b9a53a" stroke-width="1"/><path d="M8 9.5L22 7L21.5 17.5L8 20.5Z" fill="#fbf09a" stroke="#b9a53a" stroke-width="1"/><path d="M2 12C2 5 7 2.5 11 4.5L12 1.5L14.5 8L7.5 8.5L9 6.5C6 6 4 8 5.5 13Z" fill="#3fb53f" stroke="#1f7a1f" stroke-width=".8"/></svg>
<svg class="a" style="left:1114px;top:116px;" width="24" height="24" viewBox="0 0 24 24"><path d="M1 2.5A1.5 1.5 0 0 1 2.5 1H21.5A1.5 1.5 0 0 1 23 2.5V21.5A1.5 1.5 0 0 1 21.5 23H3.5L1 20.5Z" fill="#2a60b8" stroke="#163d82" stroke-width="1"/><rect x="5" y="1.5" width="14" height="10" fill="#f4f6fa"/><path d="M7 4H17M7 6.5H17M7 9H17" stroke="#b9c3d4" stroke-width="1"/><rect x="6.5" y="15" width="11" height="8" fill="#dfe5ef"/><rect x="8" y="16.5" width="3.5" height="5.5" fill="#2a60b8"/></svg>
<div class="a" style="left:1111px;top:146px;width:28px;height:1px;background:#b8b8b8;"></div>
<svg class="a" style="left:1114px;top:155px;" width="24" height="22" viewBox="0 0 24 22"><rect x="1" y="1" width="22" height="20" fill="#c9d3ea" stroke="#27346e" stroke-width="1.6"/><rect x="3" y="3" width="18" height="16" fill="#aebbe0" stroke="#4a5a9a" stroke-width=".8"/><circle cx="8.5" cy="9" r="4" fill="#e8f0ff" stroke="#27346e" stroke-width="1.4"/><circle cx="8.5" cy="9" r="1.6" fill="#3a6ad0"/><rect x="14" y="7" width="6" height="3" fill="#6fbf73"/><path d="M5 16H16" stroke="#27346e" stroke-width="2" stroke-dasharray="2 1"/></svg>
<svg class="a" style="left:1114px;top:186px;" width="26" height="20" viewBox="0 0 26 20"><path d="M1 10L14 2L25 7V11L12 19L1 14Z" fill="#3a7cc8" stroke="#1c4c8e" stroke-width="1"/><path d="M1 10L12 15L25 7" fill="none" stroke="#9cc6f2" stroke-width="1.2"/><path d="M1 10L14 2L25 7L12 15Z" fill="#4f92dc"/><path d="M4 13L10 16" stroke="#5fd06a" stroke-width="1.4"/></svg>
<svg class="a" style="left:1114px;top:214px;" width="26" height="24" viewBox="0 0 26 24"><path d="M5 3L18 1L22 4V18L18 22L6 23L1 18V8Z" fill="#e8f1ef" stroke="#4e8d86" stroke-width="1.3"/><path d="M5 15L17 7V21Z" fill="#f4faf9" stroke="#4e8d86" stroke-width="1.5"/><path d="M17 12H24M17 15H24" stroke="#c9d6d4" stroke-width="1.5"/></svg>
<div class="a" style="left:1111px;top:244px;width:28px;height:1px;background:#b8b8b8;"></div>
<svg class="a" style="left:1114px;top:255px;" width="22" height="18" viewBox="0 0 22 18"><path d="M0 4H7M4.5 1.5L7.5 4L4.5 6.5" fill="none" stroke="#44446e" stroke-width="1.3"/><rect x="7.5" y="2" width="10.5" height="4" fill="#a8a8d8" stroke="#44446e" stroke-width="1.1"/><path d="M18 4H21.5" stroke="#44446e" stroke-width="1.3"/><path d="M0 12.5H7M4.5 10L7.5 12.5L4.5 15" fill="none" stroke="#44446e" stroke-width="1.3"/><rect x="7.5" y="10.5" width="10.5" height="4" fill="#a8a8d8" stroke="#44446e" stroke-width="1.1"/><path d="M18 12.5H21.5" stroke="#44446e" stroke-width="1.3"/></svg>
<svg class="a" style="left:1114px;top:284px;" width="26" height="23" viewBox="0 0 26 23"><rect x="1" y="1" width="21" height="15" rx="1.5" fill="#3c6cc0" stroke="#1c3c86" stroke-width="1.4"/><rect x="3" y="3" width="17" height="11" fill="#8fd0f0"/><path d="M3 14L6 8L9 11L12 6L15 10L18 7L20 9V14Z" fill="#f2d43c"/><rect x="13" y="11" width="10" height="10" fill="#fff" stroke="#1c3c86" stroke-width="1.4"/><path d="M14.5 15L17.5 19L24.5 9" fill="none" stroke="#1c4fb0" stroke-width="2.2"/></svg>
<svg class="a" style="left:1114px;top:315px;" width="26" height="22" viewBox="0 0 26 22"><path d="M0 5H7M4.5 2.5L7.5 5L4.5 7.5" fill="none" stroke="#44446e" stroke-width="1.3"/><rect x="7.5" y="3" width="10.5" height="4" fill="#a8a8d8" stroke="#44446e" stroke-width="1.1"/><path d="M18 5H21.5" stroke="#44446e" stroke-width="1.3"/><rect x="11.5" y="9.5" width="10" height="10" fill="#fff" stroke="#1c3c86" stroke-width="1.4"/><path d="M13 13L16.5 18L24 7" fill="none" stroke="#1c4fb0" stroke-width="2.2"/></svg>
<svg class="a" style="left:1114px;top:345px;" width="26" height="18" viewBox="0 0 26 18"><path d="M1 9L4 8L7.5 14L12 2H24" fill="none" stroke="#2fae2f" stroke-width="2.4" stroke-linejoin="round"/><rect x="12.5" y="6.5" width="11.5" height="8" rx="2" fill="#2fae2f"/><path d="M14 12.5V9.5H16V12.5M18 10.5H20M19 9.5V11.5M21.5 8.5V12.5H23V10.5H21.5" fill="none" stroke="#e8ffe8" stroke-width="1"/></svg>
<div class="a" style="left:1111px;top:372px;width:28px;height:1px;background:#b8b8b8;"></div>
<div class="a" style="left:1109px;top:377.5px;width:32px;height:28px;background:#cfe6f8;"></div>
<svg class="a" style="left:1115px;top:382px" width="22" height="22" viewBox="0 0 22 22"><defs><radialGradient id="bs" cx=".75" cy=".25" r="1"><stop offset="0" stop-color="#3d94f4"/><stop offset=".6" stop-color="#0a5ad8"/><stop offset="1" stop-color="#0848b8"/></radialGradient></defs><rect x=".6" y=".6" width="20.8" height="20.8" rx="2.5" fill="url(#bs)" stroke="#0a3a9a" stroke-width="1.2"/></svg>
<svg class="a" style="left:1115px;top:410px;" width="22" height="24" viewBox="0 0 22 24"><path d="M3 2L19 12L3 22Z" fill="#d4d4d4" stroke="#bcbcbc" stroke-width="1.4" stroke-linejoin="round"/></svg>
<svg class="a" style="left:1113px;top:440px;" width="24" height="24" viewBox="0 0 24 24"><circle cx="12" cy="12" r="10.5" fill="#d2d2d2" stroke="#c0c0c0" stroke-width="1"/></svg>
<svg class="a" style="left:1113px;top:470px;" width="24" height="24" viewBox="0 0 24 24"><rect x="2" y="1" width="8.5" height="21.5" rx="2" fill="#cfcfcf" stroke="#c0c0c0" stroke-width="1"/><rect x="13" y="1" width="8.5" height="21.5" rx="2" fill="#cfcfcf" stroke="#c0c0c0" stroke-width="1"/></svg>
<div class="a" style="left:1111px;top:500px;width:28px;height:1px;background:#b8b8b8;"></div>
<svg class="a" style="left:1114px;top:508px;" width="26" height="24" viewBox="0 0 26 24"><path d="M1 9L13 2L23 6V10L11 17L1 13Z" fill="#3a7cc8" stroke="#1c4c8e" stroke-width="1"/><path d="M1 9L13 2L23 6L11 13Z" fill="#5a9ae0"/><path d="M6 9L15 4M9 10.5L18 5.5" stroke="#e8f2ff" stroke-width="1.4"/><rect x="12" y="12" width="10" height="10" fill="#fff" stroke="#1c3c86" stroke-width="1.4"/><path d="M13.5 15.5L16.5 20L23.5 9.5" fill="none" stroke="#1c4fb0" stroke-width="2.2"/></svg>
<svg class="a" style="left:1114px;top:538px;" width="26" height="24" viewBox="0 0 26 24"><path d="M1 9L13 2L23 6V10L11 17L1 13Z" fill="#3a7cc8" stroke="#1c4c8e" stroke-width="1"/><path d="M1 9L13 2L23 6L11 13Z" fill="#5a9ae0"/><path d="M6 9L15 4M9 10.5L18 5.5" stroke="#e8f2ff" stroke-width="1.4"/><circle cx="18" cy="17" r="6" fill="#d81f10" stroke="#8e0f06" stroke-width="1"/></svg>
<div class="a" style="left:1111px;top:568px;width:28px;height:1px;background:#b8b8b8;"></div>
<svg class="a" style="left:1114px;top:577px;" width="26" height="22" viewBox="0 0 26 22"><circle cx="12" cy="8" r="6.3" fill="#e6f6f6" stroke="#2f9a9a" stroke-width="1.6"/><path d="M16.5 12.5L21 18" stroke="#2f9a9a" stroke-width="3"/><path d="M1 8H4L5 6L6.5 10L8 8M8 8L9.5 4L11 11L12.5 6L14 9L15 8H18L20 7L22 9H24" fill="none" stroke="#2f7a7a" stroke-width="1.2"/></svg>
<svg class="a" style="left:1113px;top:607px;" width="24" height="23" viewBox="0 0 24 23"><path d="M5 1H17L22 6V19H18V22H2V5H5Z" fill="#e9e9e9" stroke="#c4c4c4" stroke-width="1.3"/><rect x="6" y="7" width="6" height="5" fill="none" stroke="#c4c4c4" stroke-width="1.2"/><rect x="11" y="13" width="6" height="5" fill="none" stroke="#c4c4c4" stroke-width="1.2"/></svg>
<svg class="a" style="left:1114px;top:636px;" width="26" height="24" viewBox="0 0 26 24"><rect x="1" y="1" width="21" height="18" fill="#c9d3ea" stroke="#27346e" stroke-width="1.6"/><circle cx="8" cy="8" r="3.8" fill="#e8f0ff" stroke="#27346e" stroke-width="1.3"/><circle cx="8" cy="8" r="1.5" fill="#3a6ad0"/><rect x="13" y="6" width="6" height="3" fill="#6fbf73"/><path d="M4 15H14" stroke="#27346e" stroke-width="2" stroke-dasharray="2 1"/><path d="M11 23L13 18L20 11L23 14L16 21Z" fill="#3db03d" stroke="#1d6a1d" stroke-width=".8"/><circle cx="22" cy="11.5" r="2.4" fill="#d83a2a"/></svg>
</div>
<div class="a g" id="mdi-measure" aria-label="Measure Window [2]">
<div class="a aero" style="left:1156px;top:89px;width:260px;height:174px"></div>
<svg class="a" style="left:1166px;top:100.5px;" width="17" height="17" viewBox="0 0 17 17"><rect x=".6" y=".6" width="13.8" height="11" fill="#fff" stroke="#5a6f9a" stroke-width="1.1"/><rect x=".6" y=".6" width="13.8" height="3" fill="#3b6fc4"/><rect x="3.5" y="9" width="12" height="6" fill="#dfe8f6" stroke="#2a4a8a" stroke-width="1.1"/><path d="M5.5 15V12M7.5 15V13M9.5 15V12M11.5 15V13M13.5 15V12" stroke="#2a4a8a" stroke-width="1"/></svg>
<span class="t" style="left:1186.5px;top:103.2px;letter-spacing:-0.10px;">Measure Window [2]</span>
<div class="a ab" style="left:1306.5px;top:99.5px;width:31px;height:17px"></div>
<div class="a ab" style="left:1340px;top:99.5px;width:31.5px;height:17px"></div>
<div class="a ab ac" style="left:1374px;top:99.5px;width:32px;height:17px"></div>
<svg class="a" style="left:1306px;top:99px" width="101" height="18" viewBox="0 0 101 18"><rect x="11" y="8.5" width="9.5" height="3.5" rx="1" fill="#fff" stroke="#55657a" stroke-width="1"/><rect x="44.5" y="4.5" width="9" height="7.5" rx="1" fill="#fff" stroke="#55657a" stroke-width="1.2"/><rect x="47" y="7" width="4" height="2.5" fill="#8898ad"/><path d="M79.5 5.5L87.5 11.5M87.5 5.5L79.5 11.5" stroke="#5a2018" stroke-width="4.4"/><path d="M79.5 5.5L87.5 11.5M87.5 5.5L79.5 11.5" stroke="#fff" stroke-width="2.6"/></svg>
<div class="a" style="left:1163.5px;top:120px;width:244.5px;height:135px;background:#f0f0f0;"></div>
<div class="a rw" style="left:1164px;top:120.5px;width:243.5px;height:25.5px"></div>
<span class="t" style="left:1168.2px;top:127.9px;font-size:12.5px;letter-spacing:0.37px;">abmhdev</span>
<div class="a dv" style="left:1300.5px;top:122.5px;height:21.5px"></div>
<div class="a dv" style="left:1386px;top:122.5px;height:21.5px"></div>
<span class="t" style="left:1376.5px;top:127.4px;font-size:12.5px;">-</span>
<span class="t" style="left:1391.7px;top:127.9px;font-size:12.5px;letter-spacing:-0.22px;">[]</span>
<div class="a rw" style="left:1164px;top:147.5px;width:243.5px;height:25.5px"></div>
<span class="t" style="left:1168.2px;top:154.9px;font-size:12.5px;letter-spacing:0.02px;">abweichungsSchwelle</span>
<div class="a dv" style="left:1300.5px;top:149.5px;height:21.5px"></div>
<div class="a dv" style="left:1386px;top:149.5px;height:21.5px"></div>
<span class="t" style="left:1376.5px;top:154.4px;font-size:12.5px;">-</span>
<span class="t" style="left:1391.7px;top:154.9px;font-size:12.5px;letter-spacing:-0.22px;">[]</span>
<div class="a rw" style="left:1164px;top:174.5px;width:243.5px;height:25.5px"></div>
<span class="t" style="left:1168.2px;top:181.9px;font-size:12.5px;letter-spacing:-0.24px;">Adc_idxAN00IA_C</span>
<div class="a dv" style="left:1300.5px;top:176.5px;height:21.5px"></div>
<div class="a dv" style="left:1386px;top:176.5px;height:21.5px"></div>
<span class="t" style="left:1376.5px;top:181.4px;font-size:12.5px;">-</span>
<span class="t" style="left:1391.7px;top:181.9px;font-size:12.5px;letter-spacing:-0.22px;">[]</span>
<div class="a rw" style="left:1164px;top:201.5px;width:243.5px;height:25.5px"></div>
<span class="t" style="left:1168.2px;top:208.9px;font-size:12.5px;letter-spacing:-0.24px;">Adc_idxAN03IA_C</span>
<div class="a dv" style="left:1300.5px;top:203.5px;height:21.5px"></div>
<div class="a dv" style="left:1386px;top:203.5px;height:21.5px"></div>
<span class="t" style="left:1376.5px;top:208.4px;font-size:12.5px;">-</span>
<span class="t" style="left:1391.7px;top:208.9px;font-size:12.5px;letter-spacing:-0.22px;">[]</span>
<div class="a rw red" style="left:1164px;top:228.5px;width:243.5px;height:25.5px"></div>
<span class="t" style="left:1168.2px;top:235.9px;font-size:12.5px;letter-spacing:-0.24px;">Adc_idxAN05IA_C</span>
<div class="a dv" style="left:1300.5px;top:230.5px;height:21.5px"></div>
<div class="a dv" style="left:1386px;top:230.5px;height:21.5px"></div>
<span class="t" style="left:1376.5px;top:235.4px;font-size:12.5px;">-</span>
<span class="t" style="left:1391.7px;top:235.9px;font-size:12.5px;letter-spacing:-0.22px;">[]</span>
</div>
<div class="a g" id="mdi-tool-measure" aria-label="Tool API Measurement [1]">
<div class="a pw" style="left:1155px;top:274px;width:258px;height:255px"></div>
<svg class="a" style="left:1164.5px;top:283.5px;" width="17" height="17" viewBox="0 0 17 17"><rect x=".6" y=".6" width="13.8" height="11" fill="#f7f7f7" stroke="#c6c6c6" stroke-width="1.1"/><rect x=".6" y=".6" width="13.8" height="3" fill="#d4d4d4"/><rect x="3.5" y="9" width="12" height="6" fill="#f2f2f2" stroke="#bdbdbd" stroke-width="1.1"/><path d="M5.5 15V12M7.5 15V13M9.5 15V12M11.5 15V13M13.5 15V12" stroke="#bdbdbd" stroke-width="1"/></svg>
<span class="t" style="left:1186.2px;top:288.2px;letter-spacing:-0.08px;">Tool API Measurement [1]</span>
<div class="a rw" style="left:1163px;top:305px;width:241.5px;height:25.5px"></div>
<span class="t" style="left:1167.3px;top:312.9px;font-size:12.5px;">Lcc_facLambdaCorr</span>
<div class="a dv" style="left:1288px;top:307px;height:21.5px"></div>
<div class="a dv" style="left:1353px;top:307px;height:21.5px"></div>
<span class="t" style="left:1343.8px;top:312.4px;font-size:12.5px;">-</span>
<span class="t" style="left:1358.0px;top:312.9px;font-size:12.5px;letter-spacing:0.61px;">[g/km]</span>
<div class="a rw" style="left:1163px;top:332px;width:241.5px;height:25.5px"></div>
<span class="t" style="left:1167.3px;top:339.9px;font-size:12.5px;letter-spacing:-0.40px;">Isc_flgFu...</span>
<div class="a dv" style="left:1225.5px;top:334px;height:21.5px"></div>
<div class="a dv" style="left:1378px;top:334px;height:21.5px"></div>
<span class="t" style="left:1369.0px;top:339.4px;font-size:12.5px;">-</span>
<span class="t" style="left:1382.7px;top:339.9px;font-size:12.5px;letter-spacing:-0.26px;">[g..</span>
<div class="a rw" style="left:1163px;top:359px;width:241.5px;height:25.5px"></div>
<span class="t" style="left:1167.3px;top:366.9px;font-size:12.5px;letter-spacing:0.03px;">Afr_facLambdaReq</span>
<div class="a dv" style="left:1284px;top:361px;height:21.5px"></div>
<div class="a dv" style="left:1353px;top:361px;height:21.5px"></div>
<span class="t" style="left:1343.8px;top:366.4px;font-size:12.5px;">-</span>
<span class="t" style="left:1358.0px;top:366.9px;font-size:12.5px;letter-spacing:0.61px;">[g/km]</span>
<div class="a rw" style="left:1163px;top:386px;width:241.5px;height:25.5px"></div>
<span class="t" style="left:1167.3px;top:393.9px;font-size:12.5px;letter-spacing:0.04px;">Lamsoni</span>
<div class="a dv" style="left:1220.5px;top:388px;height:21.5px"></div>
<div class="a dv" style="left:1353px;top:388px;height:21.5px"></div>
<span class="t" style="left:1343.8px;top:393.4px;font-size:12.5px;">-</span>
<span class="t" style="left:1358.0px;top:393.9px;font-size:12.5px;letter-spacing:0.61px;">[g/km]</span>
<div class="a rw" style="left:1163px;top:413px;width:241.5px;height:25.5px"></div>
<span class="t" style="left:1167.3px;top:420.9px;font-size:12.5px;letter-spacing:-0.37px;">Stc_flgFue...</span>
<div class="a dv" style="left:1236px;top:415px;height:21.5px"></div>
<div class="a dv" style="left:1378.5px;top:415px;height:21.5px"></div>
<span class="t" style="left:1369.7px;top:420.4px;font-size:12.5px;">-</span>
<span class="t" style="left:1384.0px;top:420.9px;font-size:12.5px;letter-spacing:-0.22px;">[...</span>
<div class="a rw" style="left:1163px;top:440px;width:241.5px;height:25.5px"></div>
<span class="t" style="left:1167.3px;top:447.9px;font-size:12.5px;letter-spacing:0.19px;">Mpc_pManiFilt</span>
<div class="a dv" style="left:1259px;top:442px;height:21.5px"></div>
<div class="a dv" style="left:1375px;top:442px;height:21.5px"></div>
<span class="t" style="left:1365.9px;top:447.4px;font-size:12.5px;">-</span>
<span class="t" style="left:1380.0px;top:447.9px;font-size:12.5px;letter-spacing:-0.09px;">[V]</span>
<div class="a rw" style="left:1163px;top:467px;width:241.5px;height:25.5px"></div>
<span class="t" style="left:1167.3px;top:474.9px;font-size:12.5px;letter-spacing:-0.18px;">Epm_rpmEngS...</span>
<div class="a dv" style="left:1267px;top:469px;height:21.5px"></div>
<div class="a dv" style="left:1353px;top:469px;height:21.5px"></div>
<span class="t" style="left:1343.8px;top:474.4px;font-size:12.5px;">-</span>
<span class="t" style="left:1358.0px;top:474.9px;font-size:12.5px;letter-spacing:0.40px;">[U/min]</span>
<div class="a rw red" style="left:1163px;top:494px;width:241.5px;height:25.5px"></div>
<span class="t" style="left:1167.3px;top:501.9px;font-size:12.5px;letter-spacing:-0.21px;">Lcc_flgLamb...</span>
<div class="a dv" style="left:1254px;top:496px;height:21.5px"></div>
<div class="a dv" style="left:1382px;top:496px;height:21.5px"></div>
<span class="t" style="left:1372.9px;top:501.4px;font-size:12.5px;">-</span>
<span class="t" style="left:1386.6px;top:501.9px;font-size:12.5px;letter-spacing:-0.24px;">[...</span>
</div>
<div class="a g" id="mdi-scalar" aria-label="Tool API - Scalar calibration [1]">
<div class="a pw" style="left:1154px;top:547px;width:360px;height:93px"></div>
<svg class="a" style="left:1164px;top:556.5px;" width="17" height="17" viewBox="0 0 17 17"><rect x=".6" y=".6" width="12" height="10" fill="#f7f7f7" stroke="#c6c6c6" stroke-width="1.1"/><rect x=".6" y=".6" width="12" height="3" fill="#d4d4d4"/><rect x="7.5" y="6.5" width="8" height="9" fill="#f2f2f2" stroke="#bdbdbd" stroke-width="1.1"/><path d="M9.5 14V9.5M11.5 14V9.5M13.5 14V9.5" stroke="#bdbdbd" stroke-width="1"/></svg>
<span class="t" style="left:1185.0px;top:560.7px;letter-spacing:-0.08px;">Tool API - Scalar calibration [1]</span>
<div class="a rw" style="left:1162px;top:578.5px;width:343px;height:25px"></div>
<span class="t" style="left:1168.3px;top:585.7px;font-size:12.5px;letter-spacing:-0.03px;">Lcc_flgSwitch2PIDController</span>
<div class="a dv" style="left:1333.5px;top:580.5px;height:21px"></div>
<div class="a" style="left:1346px;top:580.5px;width:87.5px;height:20px;background:#f1f1f1;"></div>
<span class="t" style="left:1349.4px;top:583.9px;font-size:12.5px;letter-spacing:-0.07px;">251.000000</span>
<svg class="a" style="left:1433.5px;top:580.5px" width="16" height="21" viewBox="0 0 16 21"><rect x=".5" y=".5" width="15" height="19" fill="#f6f6f6" stroke="#c6c6c6" stroke-width="1"/><path d="M1 10H15" stroke="#dcdcdc" stroke-width="1"/><path d="M5 7L8 3.6L11 7Z" fill="#666"/><path d="M5 13L8 16.4L11 13Z" fill="#666"/></svg>
<div class="a dv" style="left:1453.5px;top:580.5px;height:21px"></div>
<span class="t" style="left:1458.4px;top:584.5px;font-size:12.5px;letter-spacing:0.57px;">[grad]</span>
<div class="a rw red" style="left:1162px;top:606px;width:342px;height:24px"></div>
<span class="t" style="left:1168.3px;top:612.6px;font-size:12.5px;letter-spacing:0.09px;">Lcc_flgLambdaControlActive</span>
<div class="a dv" style="left:1335px;top:608px;height:21px"></div>
<div class="a" style="left:1348px;top:608px;width:87px;height:20px;background:#f1f1f1;"></div>
<span class="t" style="left:1351.9px;top:611.4px;font-size:12.5px;letter-spacing:-0.11px;">143.000000</span>
<svg class="a" style="left:1435px;top:608px" width="16" height="21" viewBox="0 0 16 21"><rect x=".5" y=".5" width="15" height="19" fill="#f6f6f6" stroke="#c6c6c6" stroke-width="1"/><path d="M1 10H15" stroke="#dcdcdc" stroke-width="1"/><path d="M5 7L8 3.6L11 7Z" fill="#666"/><path d="M5 13L8 16.4L11 13Z" fill="#666"/></svg>
<div class="a dv" style="left:1454.5px;top:608px;height:21px"></div>
<span class="t" style="left:1459.5px;top:612.0px;font-size:12.5px;letter-spacing:0.57px;">[grad]</span>
</div>
<div class="a g" id="mdi-cal" aria-label="Calibration Window [2]">
<div class="a pw" style="left:1156px;top:661px;width:378px;height:89px"></div>
<svg class="a" style="left:1166px;top:670.5px;" width="17" height="17" viewBox="0 0 17 17"><rect x=".6" y=".6" width="12" height="10" fill="#f7f7f7" stroke="#c6c6c6" stroke-width="1.1"/><rect x=".6" y=".6" width="12" height="3" fill="#d4d4d4"/><rect x="7.5" y="6.5" width="8" height="9" fill="#f2f2f2" stroke="#bdbdbd" stroke-width="1.1"/><path d="M9.5 14V9.5M11.5 14V9.5M13.5 14V9.5" stroke="#bdbdbd" stroke-width="1"/></svg>
<span class="t" style="left:1186.4px;top:674.9px;letter-spacing:0.04px;">Calibration Window [2]</span>
<div class="a rw" style="left:1164px;top:692.5px;width:361px;height:23px"></div>
<span class="t" style="left:1170.3px;top:697.9px;font-size:12.5px;letter-spacing:-0.59px;">Adc_idxAN02IA_C</span>
<div class="a dv" style="left:1272px;top:694.5px;height:19px"></div>
<div class="a" style="left:1285px;top:694.5px;width:213px;height:19px;background:#d2d2d2;"></div>
<svg class="a" style="left:1485px;top:702px" width="9" height="6" viewBox="0 0 9 6"><path d="M.8 .8L4.5 4.8L8.2 .8" fill="none" stroke="#bcbcbc" stroke-width="1.2"/></svg>
<div class="a dv" style="left:1501px;top:694.5px;height:19px"></div>
<span class="t" style="left:1506.7px;top:697.9px;font-size:12.5px;letter-spacing:-0.07px;">[]</span>
<div class="a rw red" style="left:1164px;top:717.5px;width:361px;height:23px"></div>
<span class="t" style="left:1170.3px;top:722.9px;font-size:12.5px;letter-spacing:-0.59px;">Adc_idxAN06IA_C</span>
<div class="a dv" style="left:1272px;top:719.5px;height:19px"></div>
<div class="a" style="left:1285px;top:719.5px;width:213px;height:19px;background:#d2d2d2;"></div>
<svg class="a" style="left:1485px;top:727px" width="9" height="6" viewBox="0 0 9 6"><path d="M.8 .8L4.5 4.8L8.2 .8" fill="none" stroke="#bcbcbc" stroke-width="1.2"/></svg>
<div class="a dv" style="left:1501px;top:719.5px;height:19px"></div>
<span class="t" style="left:1506.7px;top:722.9px;font-size:12.5px;letter-spacing:-0.07px;">[]</span>
</div>
</div>
</body></html>
